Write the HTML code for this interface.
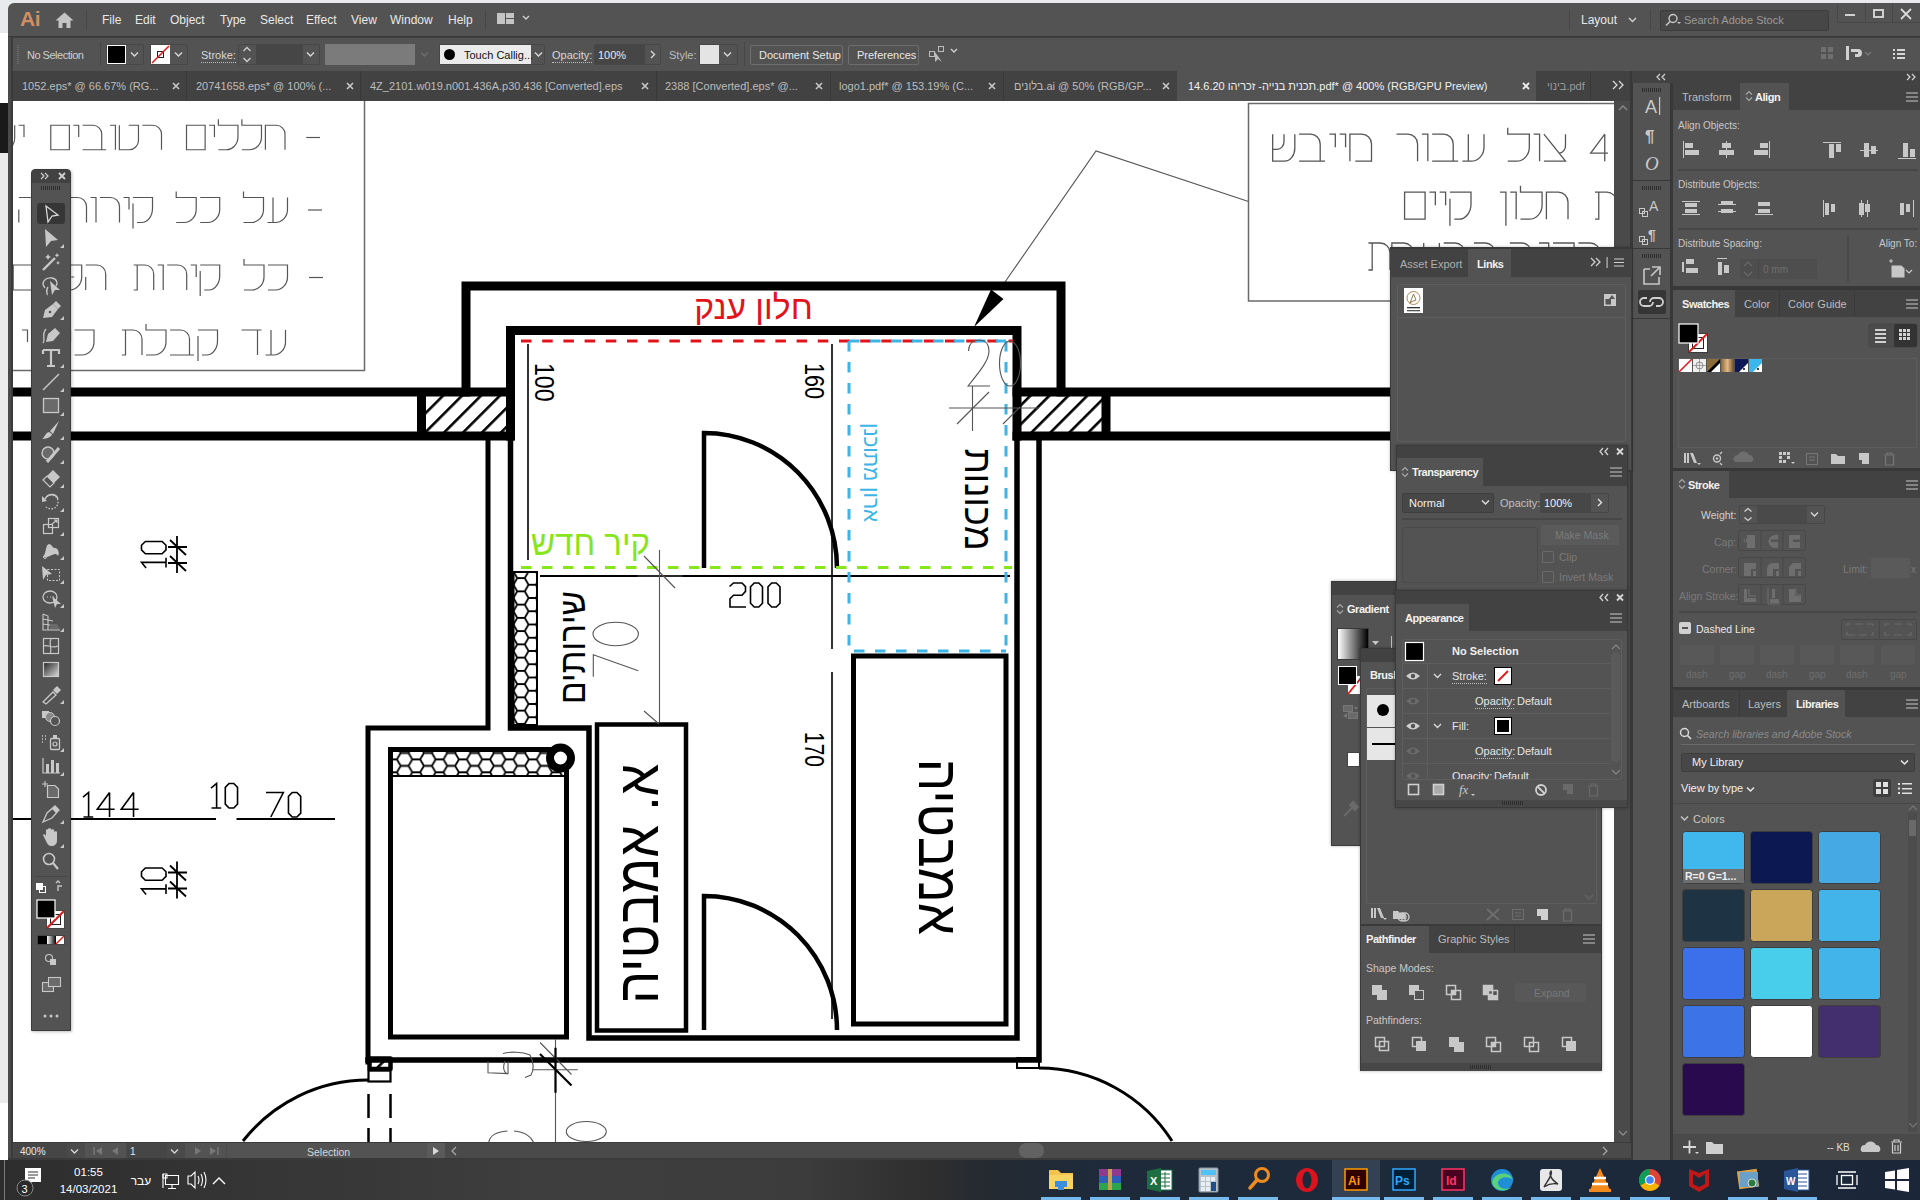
<!DOCTYPE html>
<html><head><meta charset="utf-8">
<style>
*{box-sizing:border-box}
html,body{margin:0;padding:0}
body{width:1920px;height:1200px;overflow:hidden;position:relative;background:#ececec;font-family:"Liberation Sans",sans-serif;color:#d6d6d6;font-size:11px}
.a{position:absolute}
.t{position:absolute;white-space:nowrap;line-height:1}
.pn{position:absolute;background:#535353}
svg{position:absolute;overflow:visible}
</style></head><body>
<!-- base.html -->
<div class="a" style="left:0;top:0;width:1920px;height:3px;background:#e8eaed"></div>
<div class="a" style="left:0;top:0;width:8px;height:33px;background:#e8eaed"></div>
<div class="a" style="left:0;top:33px;width:8px;height:70px;background:#fff"></div>
<div class="a" style="left:0;top:103px;width:8px;height:50px;background:#1a1a1a"></div>
<div class="a" style="left:0;top:1103px;width:8px;height:57px;background:#fff"></div>
<div class="a" style="left:8px;top:3px;width:1912px;height:1157px;background:#535353;border-radius:6px 0 0 0"></div>
<div class="a" style="left:8px;top:37px;width:5px;height:1123px;background:#4a4a4a"></div>
<div class="a" style="left:11px;top:37px;width:2px;height:1123px;background:#3a3a3a"></div>

<!-- canvas.html -->
<div class="a" style="left:13px;top:101px;width:1601px;height:1042px;background:#fff"></div>
<svg style="left:0;top:0" width="1920" height="1200" viewBox="0 0 1920 1200"><defs><clipPath id="cv"><rect x="13" y="101" width="1601" height="1042"/></clipPath>
<pattern id="hexv" patternUnits="userSpaceOnUse" x="521" y="584.75" width="22.5" height="13.25"><path d="M0 6.625 H3.75 L7.5 0 H15 L18.75 6.625 H22.5 M3.75 6.625 L7.5 13.25 H15 L18.75 6.625" fill="none" stroke="#000" stroke-width="1.8"/></pattern>
<pattern id="hexh" patternUnits="userSpaceOnUse" x="404.6" y="759.4" width="23.3" height="12.9"><path d="M0 6.45 H3.9 L7.75 0 H15.55 L19.4 6.45 H23.3 M3.9 6.45 L7.75 12.9 H15.55 L19.4 6.45" fill="none" stroke="#000" stroke-width="1.8"/></pattern>
<pattern id="hatch" patternUnits="userSpaceOnUse" width="13.4" height="13.4" patternTransform="translate(3,0) rotate(45)"><rect x="0" y="0" width="2.6" height="13.4" fill="#000"/></pattern>
</defs><g clip-path="url(#cv)">
<rect x="-10" y="95" width="374.5" height="275.5" fill="none" stroke="#6a6a6a" stroke-width="1.5"/>
<rect x="1248.5" y="103.5" width="420" height="197.5" fill="none" stroke="#6a6a6a" stroke-width="1.5"/>
<polyline points="1005,282 1096,151 1248.5,201.5" fill="none" stroke="#555" stroke-width="1.1"/>
<rect x="425" y="396" width="82" height="36" fill="url(#hatch)"/>
<rect x="1021" y="396" width="82" height="36" fill="url(#hatch)"/>
<rect x="513.5" y="572" width="23.5" height="153" fill="url(#hexv)" stroke="#000" stroke-width="2"/>
<rect x="392" y="752" width="172" height="24" fill="url(#hexh)"/>
<line x1="390" y1="776" x2="566" y2="776" stroke="#000" stroke-width="2"/>
<path d="M466 392 V286 H1061 V392" stroke="#000" fill="none" stroke-linejoin="miter" stroke-linecap="square" stroke-width="9"/>
<path d="M510.5 436 V330.5 H1017 V436" stroke="#000" fill="none" stroke-linejoin="miter" stroke-linecap="square" stroke-width="9"/>
<path d="M0 392 H510 M0 436 H510 M421.5 392 V436" stroke="#000" fill="none" stroke-linejoin="miter" stroke-linecap="square" stroke-width="9"/>
<path d="M1017 392 H1700 M1017 436 H1700 M1106 392 V436" stroke="#000" fill="none" stroke-linejoin="miter" stroke-linecap="square" stroke-width="9"/>
<path d="M488 436 V728 H368 V1062" stroke="#000" fill="none" stroke-linejoin="miter" stroke-linecap="square" stroke-width="5"/>
<path d="M510.5 436 V728 H589 V1038 H1017 V436" stroke="#000" fill="none" stroke-linejoin="miter" stroke-linecap="square" stroke-width="5.5"/>
<path d="M1039 436 V1060 H368" stroke="#000" fill="none" stroke-linejoin="miter" stroke-linecap="square" stroke-width="5.5"/>
<rect x="853.5" y="656" width="152.5" height="368" stroke="#000" fill="none" stroke-linejoin="miter" stroke-linecap="square" stroke-width="5"/>
<rect x="597" y="724.5" width="89" height="306" stroke="#000" fill="none" stroke-linejoin="miter" stroke-linecap="square" stroke-width="4.5"/>
<rect x="390.5" y="749.5" width="176" height="287.5" stroke="#000" fill="none" stroke-linejoin="miter" stroke-linecap="square" stroke-width="5"/>
<circle cx="560.5" cy="758" r="10.5" fill="#fff" stroke="#000" stroke-width="8"/>
<path d="M704 568 V433 A133 135 0 0 1 837 568" fill="none" stroke="#000" stroke-width="4.5"/>
<path d="M704 1030 V896 A133 134 0 0 1 837 1030" fill="none" stroke="#000" stroke-width="4.5"/>
<path d="M528 344 V560 M832 344 V649 M832 672 V1019" stroke="#000" stroke-width="1.6" fill="none"/>
<path d="M540 576 H1010" stroke="#000" stroke-width="2" fill="none"/>
<path d="M521 341 H1013" stroke="#e3131b" stroke-width="3" stroke-dasharray="10.5 10.7" fill="none"/>
<path d="M849 341 H1006 M849 341 V651 H1006 M1006 341 V651" stroke="#3db4e8" stroke-width="3" stroke-dasharray="10.5 10.5" fill="none"/>
<path d="M521 567.5 H1012" stroke="#87e51c" stroke-width="3" stroke-dasharray="10.5 10.5" fill="none"/>
<path d="M974 327 L991 289.5 L1003.5 299 Z" fill="#000"/>
<path d="M13 819 H216 M236.5 819 H335" stroke="#000" stroke-width="2" fill="none"/>
<path d="M243 1141 A158.6 158.6 0 0 1 368 1080" fill="none" stroke="#000" stroke-width="3"/>
<path d="M1039 1068 A157.7 157.7 0 0 1 1172 1141" fill="none" stroke="#000" stroke-width="3"/>
<path d="M368.5 1094 V1145 M390.5 1094 V1145" stroke="#000" stroke-width="2.5" stroke-dasharray="24 10" fill="none"/>
<rect x="369.5" y="1058.5" width="21" height="10.5" fill="url(#hatch)" stroke="#000" stroke-width="4.5" stroke-linejoin="round"/>
<rect x="368.5" y="1070.5" width="22" height="11" fill="none" stroke="#000" stroke-width="2.2"/>
<rect x="1017" y="1058" width="22" height="10" fill="none" stroke="#000" stroke-width="2"/>
<path d="M659.5 550 V722 M637.5 576 H682.5 M644 556 L675 588 M644 711 L659 724" stroke="#555" stroke-width="1.1" fill="none"/>
<path d="M949 408 H1039 M972.5 386 V431 M957 424 L989 392 M1003 424 L1020 407" stroke="#555" stroke-width="1.1" fill="none"/>
<path d="M555.5 1039 V1143 M532.7 1069.75 H577.8 M540 1042.5 L571.5 1074.5" stroke="#555" stroke-width="1.1" fill="none"/>
</g>
<g clip-path="url(#cv)">
<text x="753.5" y="319" font-size="33" fill="#e3131b" font-family="Liberation Sans" font-weight="normal" text-anchor="middle" style="unicode-bidi:bidi-override;direction:ltr" textLength="118.5" lengthAdjust="spacingAndGlyphs">קנע ןולח</text>
<text x="590.5" y="555" font-size="34.5" fill="#87e51c" font-family="Liberation Sans" font-weight="normal" text-anchor="middle" style="unicode-bidi:bidi-override;direction:ltr" textLength="119" lengthAdjust="spacingAndGlyphs">שדח ריק</text>
<text x="0" y="0" font-size="21.5" fill="#3db4e8" font-family="Liberation Sans" font-weight="normal" text-anchor="middle" style="unicode-bidi:bidi-override;direction:ltr" textLength="99" lengthAdjust="spacingAndGlyphs" transform="translate(864,472.5) rotate(90)">ןנכותמ ןורא</text>
<text x="0" y="0" font-size="39" fill="#000" font-family="Liberation Sans" font-weight="normal" text-anchor="middle" style="unicode-bidi:bidi-override;direction:ltr" textLength="102" lengthAdjust="spacingAndGlyphs" transform="translate(964.6,499.8) rotate(90)">תונוכמ</text>
<text x="0" y="0" font-size="36" fill="#000" font-family="Liberation Sans" font-weight="normal" text-anchor="middle" style="unicode-bidi:bidi-override;direction:ltr" textLength="113" lengthAdjust="spacingAndGlyphs" transform="translate(585,647.5) rotate(-90)">םיתוריש</text>
<text x="0" y="0" font-size="58" fill="#000" font-family="Liberation Sans" font-weight="normal" text-anchor="middle" style="unicode-bidi:bidi-override;direction:ltr" textLength="240" lengthAdjust="spacingAndGlyphs" transform="translate(657.6,883.8) rotate(-90)">היטבמא .א</text>
<text x="0" y="0" font-size="56" fill="#000" font-family="Liberation Sans" font-weight="normal" text-anchor="middle" style="unicode-bidi:bidi-override;direction:ltr" textLength="176" lengthAdjust="spacingAndGlyphs" transform="translate(919,846.8) rotate(90)">היטבמא</text>
<text x="0" y="0" font-size="28" fill="#000" font-family="Liberation Sans" font-weight="normal" text-anchor="middle" style="unicode-bidi:bidi-override;direction:ltr" textLength="38.7" lengthAdjust="spacingAndGlyphs" transform="translate(535,382.3) rotate(90)">100</text>
<text x="0" y="0" font-size="28" fill="#000" font-family="Liberation Sans" font-weight="normal" text-anchor="middle" style="unicode-bidi:bidi-override;direction:ltr" textLength="36" lengthAdjust="spacingAndGlyphs" transform="translate(805,381) rotate(90)">160</text>
<text x="0" y="0" font-size="28" fill="#000" font-family="Liberation Sans" font-weight="normal" text-anchor="middle" style="unicode-bidi:bidi-override;direction:ltr" textLength="35" lengthAdjust="spacingAndGlyphs" transform="translate(805,749.5) rotate(90)">170</text>
</g>
<g clip-path="url(#cv)">
<g transform="translate(729.5,583) scale(1.0)" fill="none" stroke="#000" stroke-width="1.6" stroke-linejoin="miter"><path d="M0 3.5 L4 0 H12.5 L16 3.6 V8.4 L12.5 12.2 H4 L0.5 15.8 V24 H16.5" transform="translate(0,0)"/><path d="M3.7 0 H8.3 L12 3.8 V20.2 L8.3 24 H3.7 L0 20.2 V3.8 Z" transform="translate(21,0)"/><path d="M3.7 0 H8.3 L12 3.8 V20.2 L8.3 24 H3.7 L0 20.2 V3.8 Z" transform="translate(38.5,0)"/></g>
<g transform="translate(83,792.5) scale(1.0208333333333333)" fill="none" stroke="#000" stroke-width="1.5673469387755103" stroke-linejoin="miter"><path d="M0 4.5 L5.5 0 V24 M0.5 24 H10" transform="translate(0,0)"/><path d="M12 0 L0 16.4 H17 M12 0 V24" transform="translate(14,0)"/><path d="M12 0 L0 16.4 H17 M12 0 V24" transform="translate(37.5,0)"/></g>
<g transform="translate(211,783.5) scale(1.0208333333333333)" fill="none" stroke="#000" stroke-width="1.5673469387755103" stroke-linejoin="miter"><path d="M0 4.5 L5.5 0 V24 M0.5 24 H10" transform="translate(0,0)"/><path d="M3.7 0 H8.3 L12 3.8 V20.2 L8.3 24 H3.7 L0 20.2 V3.8 Z" transform="translate(14,0)"/></g>
<g transform="translate(266,792.5) scale(1.0208333333333333)" fill="none" stroke="#000" stroke-width="1.5673469387755103" stroke-linejoin="miter"><path d="M0 0 H17 L4.7 24" transform="translate(0,0)"/><path d="M3.7 0 H8.3 L12 3.8 V20.2 L8.3 24 H3.7 L0 20.2 V3.8 Z" transform="translate(22,0)"/></g>
<g transform="translate(141.5,568) rotate(-90) scale(1.0208333333333333)" fill="none" stroke="#000" stroke-width="1.5673469387755103" stroke-linejoin="miter"><path d="M0 4.5 L5.5 0 V24 M0.5 24 H10" transform="translate(0,0)"/><path d="M3.7 0 H8.3 L12 3.8 V20.2 L8.3 24 H3.7 L0 20.2 V3.8 Z" transform="translate(14,0)"/></g>
<g transform="translate(141.5,894.5) rotate(-90) scale(1.0208333333333333)" fill="none" stroke="#000" stroke-width="1.5673469387755103" stroke-linejoin="miter"><path d="M0 4.5 L5.5 0 V24 M0.5 24 H10" transform="translate(0,0)"/><path d="M3.7 0 H8.3 L12 3.8 V20.2 L8.3 24 H3.7 L0 20.2 V3.8 Z" transform="translate(14,0)"/></g>
<path d="M177 536 V573 M168 547 H187 M168 563 H187 M170 540 L186 555 M170 556 L186 571" stroke="#000" stroke-width="1.8" fill="none"/>
<path d="M177 861.5 V898.5 M168 872.5 H187 M168 888.5 H187 M170 865.5 L186 880.5 M170 881.5 L186 896.5" stroke="#000" stroke-width="1.8" fill="none"/>
<g fill="none" stroke="#555" stroke-width="1.1" clip-path="url(#cv)">
<path d="M968.5 351 C969 343 974 340 979 340 C985 340 989 344 989 351 C989 360 981 370 968 386 H990"/>
<ellipse cx="1010" cy="363.5" rx="10.5" ry="22.5"/>
<path d="M593.3 676.7 V654.7 L638.3 670.7"/><ellipse cx="615.7" cy="634" rx="22.7" ry="11.7"/>
</g>
<g clip-path="url(#cv)" stroke-linejoin="miter">
<g fill="none" stroke="#555" stroke-width="1.2" vector-effect="non-scaling-stroke"><path transform="translate(306.28,125.25) scale(0.9800)" d="M0 12.5 H14"/></g>
<g fill="none" stroke="#555" stroke-width="1.2" vector-effect="non-scaling-stroke"><path transform="translate(265.40,125.25) scale(0.9800)" d="M0 25 V0 H11 A9 9 0 0 1 20 9 V25"/><path transform="translate(241.88,125.25) scale(0.9800)" d="M0 -6 V0 H20 V12 A12 13 0 0 1 8 25 H0"/><path transform="translate(218.36,125.25) scale(0.9800)" d="M0 -6 V0 H20 V12 A12 13 0 0 1 8 25 H0"/><path transform="translate(209.05,125.25) scale(0.9800)" d="M0 0 H5.5 V12"/><path transform="translate(186.51,125.25) scale(0.9800)" d="M0 0 H19 V25 H0 Z"/></g>
<g fill="none" stroke="#555" stroke-width="1.2" vector-effect="non-scaling-stroke"><path transform="translate(142.39,125.25) scale(0.9800)" d="M0 0 H10.5 A9 9 0 0 1 19.5 9 V25"/><path transform="translate(119.36,125.25) scale(0.9800)" d="M0 0 V25 H10 A9.5 9.5 0 0 0 19.5 15.5 V0 H9.5"/><path transform="translate(110.05,125.25) scale(0.9800)" d="M0 0 H5.5 V25"/><path transform="translate(82.61,125.25) scale(0.9800)" d="M0 0 H10.5 A9 9 0 0 1 19.5 9 V25 M0 25 H24"/><path transform="translate(73.30,125.25) scale(0.9800)" d="M0 0 H5.5 V12"/><path transform="translate(50.76,125.25) scale(0.9800)" d="M0 0 H19 V25 H0 Z"/></g>
<g fill="none" stroke="#555" stroke-width="1.2" vector-effect="non-scaling-stroke"><path transform="translate(18.61,125.25) scale(0.9800)" d="M0 0 H5.5 V12"/><path transform="translate(-5.40,125.25) scale(0.9800)" d="M0 0 V25 H11 A9.5 12 0 0 0 20.5 13 V0 M10.5 0 V7 A6.5 7 0 0 1 4 14 H0"/></g>
<g fill="none" stroke="#555" stroke-width="1.2" vector-effect="non-scaling-stroke"><path transform="translate(308.00,197.50) scale(1.0000)" d="M0 12.5 H14"/></g>
<g fill="none" stroke="#555" stroke-width="1.2" vector-effect="non-scaling-stroke"><path transform="translate(267.50,197.50) scale(1.0000)" d="M5.5 0 V25 M20 0 V12 A12 13 0 0 1 8 25 H0"/><path transform="translate(243.50,197.50) scale(1.0000)" d="M0 -6 V0 H20 V12 A12 13 0 0 1 8 25 H0"/></g>
<g fill="none" stroke="#555" stroke-width="1.2" vector-effect="non-scaling-stroke"><path transform="translate(200.20,197.50) scale(1.0000)" d="M0 0 H19.5 V12 A12 13 0 0 1 7.5 25 H0"/><path transform="translate(176.20,197.50) scale(1.0000)" d="M0 -6 V0 H20 V12 A12 13 0 0 1 8 25 H0"/></g>
<g fill="none" stroke="#555" stroke-width="1.2" vector-effect="non-scaling-stroke"><path transform="translate(133.00,197.50) scale(1.0000)" d="M0 0 H19.5 V11 A11 14 0 0 1 8.5 25 H4 M0 6 V31"/><path transform="translate(123.50,197.50) scale(1.0000)" d="M0 0 H5.5 V12"/><path transform="translate(100.00,197.50) scale(1.0000)" d="M0 0 H10.5 A9 9 0 0 1 19.5 9 V25"/><path transform="translate(90.50,197.50) scale(1.0000)" d="M0 0 H5.5 V25"/><path transform="translate(66.50,197.50) scale(1.0000)" d="M3.5 0 V25 H0 M0 0 H11 A9 9 0 0 1 20 9 V25"/></g>
<g fill="none" stroke="#555" stroke-width="1.2" vector-effect="non-scaling-stroke"><path transform="translate(18.80,197.50) scale(1.0000)" d="M0 0 H11 A9 9 0 0 1 20 9 V25 M0 12 V25"/></g>
<g fill="none" stroke="#555" stroke-width="1.2" vector-effect="non-scaling-stroke"><path transform="translate(309.00,265.00) scale(1.0000)" d="M0 12.5 H14"/></g>
<g fill="none" stroke="#555" stroke-width="1.2" vector-effect="non-scaling-stroke"><path transform="translate(268.00,265.00) scale(1.0000)" d="M0 0 H19.5 V12 A12 13 0 0 1 7.5 25 H0"/><path transform="translate(244.00,265.00) scale(1.0000)" d="M0 -6 V0 H20 V12 A12 13 0 0 1 8 25 H0"/></g>
<g fill="none" stroke="#555" stroke-width="1.2" vector-effect="non-scaling-stroke"><path transform="translate(200.20,265.00) scale(1.0000)" d="M0 0 H19.5 V11 A11 14 0 0 1 8.5 25 H4 M0 6 V31"/><path transform="translate(190.70,265.00) scale(1.0000)" d="M0 0 H5.5 V12"/><path transform="translate(167.20,265.00) scale(1.0000)" d="M0 0 H10.5 A9 9 0 0 1 19.5 9 V25"/><path transform="translate(157.70,265.00) scale(1.0000)" d="M0 0 H5.5 V25"/><path transform="translate(133.70,265.00) scale(1.0000)" d="M3.5 0 V25 H0 M0 0 H11 A9 9 0 0 1 20 9 V25"/></g>
<g fill="none" stroke="#555" stroke-width="1.2" vector-effect="non-scaling-stroke"><path transform="translate(85.70,265.00) scale(1.0000)" d="M0 0 H11 A9 9 0 0 1 20 9 V25 M0 12 V25"/><path transform="translate(61.70,265.00) scale(1.0000)" d="M0 0 H20 V12 A12 13 0 0 1 8 25 H0 M9.5 12 H12.5"/><path transform="translate(45.70,265.00) scale(1.0000)" d="M3 0 H12 V25 H0"/><path transform="translate(36.20,265.00) scale(1.0000)" d="M0 0 H5.5 V12"/><path transform="translate(13.20,265.00) scale(1.0000)" d="M0 0 H19 V25 H0 Z"/></g>
<g fill="none" stroke="#555" stroke-width="1.2" vector-effect="non-scaling-stroke"><path transform="translate(265.50,330.00) scale(1.0000)" d="M5.5 0 V25 M20 0 V12 A12 13 0 0 1 8 25 H0"/><path transform="translate(241.50,330.00) scale(1.0000)" d="M0 0 H20 M16 0 V25"/></g>
<g fill="none" stroke="#555" stroke-width="1.2" vector-effect="non-scaling-stroke"><path transform="translate(198.00,330.00) scale(1.0000)" d="M0 0 H19.5 V11 A11 14 0 0 1 8.5 25 H4 M0 6 V31"/><path transform="translate(170.00,330.00) scale(1.0000)" d="M0 0 H10.5 A9 9 0 0 1 19.5 9 V25 M0 25 H24"/><path transform="translate(146.00,330.00) scale(1.0000)" d="M0 -6 V0 H20 V12 A12 13 0 0 1 8 25 H0"/><path transform="translate(122.00,330.00) scale(1.0000)" d="M3.5 0 V25 H0 M0 0 H11 A9 9 0 0 1 20 9 V25"/></g>
<g fill="none" stroke="#555" stroke-width="1.2" vector-effect="non-scaling-stroke"><path transform="translate(74.50,330.00) scale(1.0000)" d="M0 0 H19.5 V12 A12 13 0 0 1 7.5 25 H0"/><path transform="translate(65.00,330.00) scale(1.0000)" d="M0 0 H5.5 V12"/><path transform="translate(41.00,330.00) scale(1.0000)" d="M0 0 H11 A9 9 0 0 1 20 9 V16 A9 9 0 0 1 11 25 H0 Z"/><path transform="translate(31.50,330.00) scale(1.0000)" d="M0 0 H5.5 V25"/><path transform="translate(22.00,330.00) scale(1.0000)" d="M0 0 H5.5 V12"/></g>
<g fill="none" stroke="#555" stroke-width="1.2" vector-effect="non-scaling-stroke"><path transform="translate(1590.72,134.20) scale(1.0800)" d="M13 0 L0 17.5 H16 M13 0 V25"/></g>
<g fill="none" stroke="#555" stroke-width="1.2" vector-effect="non-scaling-stroke"><path transform="translate(1543.90,134.20) scale(1.0800)" d="M0 0 L20 25 H0 M20 0 V10 A6.5 7 0 0 1 14.5 17.5"/><path transform="translate(1533.64,134.20) scale(1.0800)" d="M0 0 H5.5 V25"/><path transform="translate(1507.72,134.20) scale(1.0800)" d="M0 -6 V0 H20 V12 A12 13 0 0 1 8 25 H0"/></g>
<g fill="none" stroke="#555" stroke-width="1.2" vector-effect="non-scaling-stroke"><path transform="translate(1462.40,134.20) scale(1.0800)" d="M5.5 0 V25 M20 0 V12 A12 13 0 0 1 8 25 H0"/><path transform="translate(1432.16,134.20) scale(1.0800)" d="M0 0 H10.5 A9 9 0 0 1 19.5 9 V25 M0 25 H24"/><path transform="translate(1421.90,134.20) scale(1.0800)" d="M0 0 H5.5 V25"/><path transform="translate(1396.52,134.20) scale(1.0800)" d="M0 0 H10.5 A9 9 0 0 1 19.5 9 V25"/></g>
<g fill="none" stroke="#555" stroke-width="1.2" vector-effect="non-scaling-stroke"><path transform="translate(1349.90,134.20) scale(1.0800)" d="M0 25 V0 H11 A9 9 0 0 1 20 9 V25 H5"/><path transform="translate(1339.64,134.20) scale(1.0800)" d="M0 0 H5.5 V12"/><path transform="translate(1329.38,134.20) scale(1.0800)" d="M0 0 H5.5 V12"/><path transform="translate(1299.14,134.20) scale(1.0800)" d="M0 0 H10.5 A9 9 0 0 1 19.5 9 V25 M0 25 H24"/><path transform="translate(1272.68,134.20) scale(1.0800)" d="M0 0 V25 H11 A9.5 12 0 0 0 20.5 13 V0 M10.5 0 V7 A6.5 7 0 0 1 4 14 H0"/></g>
<g fill="none" stroke="#555" stroke-width="1.2" vector-effect="non-scaling-stroke"><path transform="translate(1620.90,192.20) scale(1.0800)" d="M0 0 L20 25 M20 0 V8 L14 11 M0 25 V15 L6 12"/><path transform="translate(1594.98,192.20) scale(1.0800)" d="M3.5 0 V25 H0 M0 0 H11 A9 9 0 0 1 20 9 V25"/></g>
<g fill="none" stroke="#555" stroke-width="1.2" vector-effect="non-scaling-stroke"><path transform="translate(1546.40,192.20) scale(1.0800)" d="M0 25 V0 H11 A9 9 0 0 1 20 9 V25"/><path transform="translate(1520.48,192.20) scale(1.0800)" d="M0 -6 V0 H20 V12 A12 13 0 0 1 8 25 H0"/><path transform="translate(1510.22,192.20) scale(1.0800)" d="M0 0 H5.5 V25"/><path transform="translate(1499.96,192.20) scale(1.0800)" d="M0 0 H5.5 V31"/></g>
<g fill="none" stroke="#555" stroke-width="1.2" vector-effect="non-scaling-stroke"><path transform="translate(1449.94,192.20) scale(1.0800)" d="M0 0 H19.5 V11 A11 14 0 0 1 8.5 25 H4 M0 6 V31"/><path transform="translate(1439.68,192.20) scale(1.0800)" d="M0 0 H5.5 V12"/><path transform="translate(1429.42,192.20) scale(1.0800)" d="M0 0 H5.5 V12"/><path transform="translate(1404.58,192.20) scale(1.0800)" d="M0 0 H19 V25 H0 Z"/></g>
<g fill="none" stroke="#555" stroke-width="1.2" vector-effect="non-scaling-stroke"><path transform="translate(1578.40,243.00) scale(1.0800)" d="M0 0 H11 A9 9 0 0 1 20 9 V25 M0 12 V25"/><path transform="translate(1553.02,243.00) scale(1.0800)" d="M0 0 H19.5 V12 A12 13 0 0 1 7.5 25 H0"/><path transform="translate(1535.74,243.00) scale(1.0800)" d="M3 0 H12 V25 H0"/><path transform="translate(1509.82,243.00) scale(1.0800)" d="M0 0 H11 A9 9 0 0 1 20 9 V25 M0 12 V25"/></g>
<g fill="none" stroke="#555" stroke-width="1.2" vector-effect="non-scaling-stroke"><path transform="translate(1473.94,243.00) scale(1.0800)" d="M0 0 H10.5 A9 9 0 0 1 19.5 9 V25"/><path transform="translate(1443.70,243.00) scale(1.0800)" d="M0 0 H10.5 A9 9 0 0 1 19.5 9 V25 M0 25 H24"/><path transform="translate(1417.78,243.00) scale(1.0800)" d="M5.5 0 V25 M20 0 V12 A12 13 0 0 1 8 25 H0"/><path transform="translate(1391.86,243.00) scale(1.0800)" d="M0 25 V0 H11 A9 9 0 0 1 20 9 V25 H5"/></g>
<g fill="none" stroke="#555" stroke-width="1.2" vector-effect="non-scaling-stroke"><path transform="translate(1368.40,243.00) scale(1.0800)" d="M3.5 0 V25 H0 M0 0 H11 A9 9 0 0 1 20 9 V25"/></g>
</g>
<g clip-path="url(#cv)"><path d="M555.5 1047.7 V1092.7 M540 1054 L571.5 1085.5" stroke="#000" stroke-width="2.2" fill="none"/>
<g fill="none" stroke="#555" stroke-width="1.1"><path d="M508 1061.6 V1073.6 L488 1072.8 V1061.6 M503 1053.5 C510 1051.5 522 1051.5 530 1055 C534 1062 534 1070 531 1075 L525 1077.5 M505 1061 C503 1066 503 1071 507 1074"/><ellipse cx="586.3" cy="1131.5" rx="20" ry="10"/><path d="M488.5 1143 C490 1135 496 1132 507.5 1131 M514 1131 C524 1132 530 1135 534 1143"/></g></g>
</svg>
<!-- tool.html -->
<div class="a" style="left:31px;top:169px;width:40px;height:862px;background:#535353;border:1px solid #3c3c3c;border-radius:4px 4px 0 0;box-shadow:1px 1px 3px rgba(0,0,0,0.25)"></div>
<div class="a" style="left:32px;top:170px;width:38px;height:13px;background:#424242;border-radius:3px 3px 0 0"></div>
<svg style="left:0;top:0" width="100" height="1100" viewBox="0 0 100 1100">
<path d="M41 173 L44 176 L41 179 M45 173 L48 176 L45 179" stroke="#cfcfcf" stroke-width="1.2" fill="none"/>
<path d="M59 173 L65 179 M65 173 L59 179" stroke="#d0d0d0" stroke-width="1.8"/>
<g fill="#2e2e2e"><rect x="41" y="186" width="1" height="4"/><rect x="43" y="186" width="1" height="4"/><rect x="45" y="186" width="1" height="4"/><rect x="47" y="186" width="1" height="4"/><rect x="49" y="186" width="1" height="4"/><rect x="51" y="186" width="1" height="4"/><rect x="53" y="186" width="1" height="4"/><rect x="55" y="186" width="1" height="4"/><rect x="57" y="186" width="1" height="4"/><rect x="59" y="186" width="1" height="4"/></g>
<rect x="37" y="203" width="28" height="21" rx="3" fill="#363636"/>
<path d="M46 206 L58 215 L52 216 L48 222 Z" fill="none" stroke="#d8d8d8" stroke-width="1.3"/><path d="M45 229 L58 240 L51 241 L46 247 Z" fill="#c8c8c8"/><path d="M60 248 L64 244 L64 248 Z" fill="#c8c8c8"/><path d="M43 270 L55 258" stroke="#c8c8c8" stroke-width="2.4"/><path d="M48 254 l1 2 l2 1 l-2 1 l-1 2 l-1 -2 l-2 -1 l2 -1 z M57 253 l0.8 1.5 l1.5 .8 l-1.5 .8 l-.8 1.5 l-.8 -1.5 l-1.5 -.8 l1.5 -.8z M58 261 l.7 1.2 l1.2 .7 l-1.2 .7 l-.7 1.2 l-.7 -1.2 l-1.2 -.7 l1.2 -.7z" fill="#c8c8c8"/><path d="M45 288 C40 282 46 277 52 278 C57 279 58 283 56 286 M48 287 C45 291 48 294 47 295" stroke="#c8c8c8" stroke-width="1.4" fill="none"/><path d="M50 281 L60 290 L55 290 L52 295 Z" fill="#c8c8c8"/><path d="M43 318 L45 310 L53 304 L58 309 L52 317 Z" fill="#c8c8c8"/><path d="M53 304 L56 301 L61 306 L58 309" fill="#c8c8c8"/><circle cx="50" cy="312" r="1.3" fill="#535353"/><path d="M60 320 L64 316 L64 320 Z" fill="#c8c8c8"/><path d="M46 342 L48 334 L55 328 L60 333 L53 341 Z" fill="#c8c8c8"/><path d="M46 329 C41 335 46 339 43 343" stroke="#c8c8c8" stroke-width="1.3" fill="none"/><path d="M43 350 H59 V354 M43 350 V354 M51 350 V366 M47 366 H55" stroke="#c8c8c8" stroke-width="2.2" fill="none"/><path d="M60 368 L64 364 L64 368 Z" fill="#c8c8c8"/><path d="M43 390 L59 374" stroke="#c8c8c8" stroke-width="1.5"/><path d="M60 392 L64 388 L64 392 Z" fill="#c8c8c8"/><rect x="43.5" y="398.5" width="15" height="14" fill="#6a6a6a" stroke="#c8c8c8" stroke-width="1.3"/><path d="M60 416 L64 412 L64 416 Z" fill="#c8c8c8"/><path d="M59 421 L50 431 L53 434 Z" fill="#c8c8c8"/><path d="M49 432 C45 433 45 437 42 439 C48 439 52 436 52 434 Z" fill="#c8c8c8"/><path d="M60 440 L64 436 L64 440 Z" fill="#c8c8c8"/><circle cx="48" cy="453" r="6" fill="#6a6a6a" stroke="#c8c8c8" stroke-width="1.4"/><path d="M47 462 L59 448" stroke="#c8c8c8" stroke-width="3"/><path d="M60 464 L64 460 L64 464 Z" fill="#c8c8c8"/><path d="M43 480 L53 470 L60 477 L50 487 Z" fill="#c8c8c8"/><path d="M43 480 L47 476 L54 483 L50 487 Z" fill="#535353" stroke="#c8c8c8" stroke-width="1.2"/><path d="M60 488 L64 484 L64 488 Z" fill="#c8c8c8"/><path d="M45 499 C48 493 58 494 58 502 C58 509 49 511 45 506" stroke="#c8c8c8" stroke-width="1.3" stroke-dasharray="1.5 1.5" fill="none"/><path d="M45 499 C48 493 56 493 58 499" stroke="#c8c8c8" stroke-width="1.4" fill="none"/><path d="M42 496 L47 501 L42 502 Z" fill="#c8c8c8"/><path d="M60 512 L64 508 L64 512 Z" fill="#c8c8c8"/><rect x="43.5" y="524.5" width="9" height="9" fill="none" stroke="#c8c8c8" stroke-width="1.2"/><rect x="48.5" y="518.5" width="10" height="9" fill="none" stroke="#c8c8c8" stroke-width="1.2"/><path d="M52 524 L57 520 M54 520 H57 V523" stroke="#c8c8c8" stroke-width="1.1" fill="none"/><path d="M60 536 L64 532 L64 536 Z" fill="#c8c8c8"/><path d="M43 557 C47 552 45 545 49 544 C52 544 52 548 55 548 C58 548 60 553 58 556 C56 553 55 554 52 555 C49 556 47 558 43 557 Z" fill="#c8c8c8"/><circle cx="45" cy="557" r="1.5" fill="none" stroke="#c8c8c8"/><path d="M60 560 L64 556 L64 560 Z" fill="#c8c8c8"/><path d="M42 566 L52 574 L46 575 L43 580 Z" fill="#c8c8c8"/><rect x="47.5" y="569.5" width="12" height="11" fill="none" stroke="#c8c8c8" stroke-width="1" stroke-dasharray="2 1.5"/><path d="M60 584 L64 580 L64 584 Z" fill="#c8c8c8"/><ellipse cx="50" cy="597" rx="7" ry="6" fill="none" stroke="#c8c8c8" stroke-width="1.3"/><path d="M47 597 h1 M50 597 h1 M53 597 h1" stroke="#c8c8c8"/><path d="M52 596 L61 604 L57 604 L55 608 Z" fill="#c8c8c8"/><path d="M60 608 L64 604 L64 608 Z" fill="#c8c8c8"/><path d="M43 614 V630 H60 M43 614 L48 616 V630 M43 619 L53 621 M43 624 L57 626" stroke="#c8c8c8" stroke-width="1.1" fill="none"/><path d="M50 624 L57 624 L60 629 L50 629 Z" fill="#6a6a6a"/><path d="M60 632 L64 628 L64 632 Z" fill="#c8c8c8"/><rect x="43.5" y="638.5" width="15" height="15" fill="none" stroke="#c8c8c8" stroke-width="1.2"/><path d="M43 646 C48 644 52 649 58 646 M51 639 C48 644 53 649 50 654" stroke="#c8c8c8" stroke-width="1.1" fill="none"/><defs><linearGradient id="tg" x1="0" x2="1" y1="0" y2="1"><stop offset="0" stop-color="#222"/><stop offset="1" stop-color="#ddd"/></linearGradient></defs><rect x="43.5" y="662.5" width="15" height="14" fill="url(#tg)" stroke="#c8c8c8" stroke-width="1.2"/><path d="M43 702 L53 692 L56 695 L46 704 Z" fill="none" stroke="#c8c8c8" stroke-width="1.3"/><path d="M53 690 L57 686 L61 690 L57 694 Z" fill="#c8c8c8"/><path d="M60 704 L64 700 L64 704 Z" fill="#c8c8c8"/><rect x="42" y="711" width="7" height="7" fill="#c8c8c8"/><circle cx="50" cy="717" r="4.5" fill="#888" stroke="#c8c8c8"/><circle cx="55" cy="721" r="4.5" fill="#535353" stroke="#c8c8c8" stroke-width="1.2"/><path d="M42 736 h1 M45 736 h1 M42 739 h1 M45 739 h1 M42 742 h1" stroke="#c8c8c8" stroke-width="1.5"/><rect x="50.5" y="738.5" width="9" height="11" rx="1" fill="none" stroke="#c8c8c8" stroke-width="1.3"/><rect x="53" y="735" width="4" height="3" fill="#c8c8c8"/><circle cx="55" cy="744" r="2" fill="none" stroke="#c8c8c8" stroke-width="1.2"/><path d="M60 752 L64 748 L64 752 Z" fill="#c8c8c8"/><path d="M43 758 V773 H60" stroke="#c8c8c8" stroke-width="1.2" fill="none"/><rect x="46" y="764" width="3" height="9" fill="#c8c8c8"/><rect x="51" y="760" width="3" height="13" fill="#c8c8c8"/><rect x="56" y="763" width="3" height="10" fill="#c8c8c8"/><path d="M60 776 L64 772 L64 776 Z" fill="#c8c8c8"/><path d="M42 784 H48 M45 781 V787" stroke="#c8c8c8" stroke-width="1.1"/><path d="M47.5 785.5 H55 L58.5 789 V797.5 H47.5 Z" fill="#6a6a6a" stroke="#c8c8c8" stroke-width="1.2"/><path d="M43 822 L47 813 L55 806 L59 810 L52 818 Z" fill="none" stroke="#c8c8c8" stroke-width="1.3"/><path d="M55 806 L59 810 L56 813 L52 809 Z" fill="#c8c8c8"/><path d="M60 824 L64 820 L64 824 Z" fill="#c8c8c8"/><path d="M45 839 L43 835 C43 834 45 834 46 836 V830 C46 829 48 829 48 830 V835 V829 C48 828 51 828 51 829 V835 V830 C51 829 54 829 54 830 V836 V832 C54 831 57 831 57 832 V840 C57 844 55 846 51 846 C48 846 47 843 45 839 Z" fill="#c8c8c8"/><path d="M60 848 L64 844 L64 848 Z" fill="#c8c8c8"/><circle cx="49" cy="859" r="5.5" fill="none" stroke="#c8c8c8" stroke-width="1.6"/><path d="M53 863 L58 869" stroke="#c8c8c8" stroke-width="2.2"/>
<rect x="35" y="876" width="32" height="1" fill="#474747"/>
<rect x="36.5" y="883.5" width="6" height="6" fill="#000" stroke="#fff"/><rect x="39.5" y="886.5" width="6" height="6" fill="none" stroke="#fff" stroke-width="1"/><rect x="37" y="884" width="5" height="5" fill="#fff"/>
<path d="M58 891 V886 H62 M56 883 L58 881 L60 883" stroke="#c8c8c8" stroke-width="1.4" fill="none"/>
<rect x="46.5" y="910.5" width="18" height="18" fill="#fff" stroke="#444"/><rect x="50.5" y="914.5" width="10" height="10" fill="none" stroke="#222"/><path d="M47 928 L64 911" stroke="#e01b1b" stroke-width="2.2"/>
<rect x="37" y="900" width="18" height="18" fill="#000" stroke="#fff" stroke-width="1.2"/>
<rect x="37.5" y="935.5" width="27" height="9" fill="none" stroke="#444"/><rect x="38" y="936" width="9" height="8" fill="#000"/><defs><linearGradient id="tg2"><stop offset="0" stop-color="#fff"/><stop offset="1" stop-color="#000"/></linearGradient></defs><rect x="47" y="936" width="9" height="8" fill="url(#tg2)"/><rect x="56" y="936" width="8" height="8" fill="#fff"/><path d="M56 944 L64 936" stroke="#e01b1b" stroke-width="1.5"/>
<circle cx="49" cy="958" r="3.5" fill="none" stroke="#c8c8c8" stroke-width="1.1"/><rect x="50" y="959" width="6" height="6" fill="#c8c8c8"/>
<rect x="42.5" y="982.5" width="11" height="9" fill="#6a6a6a" stroke="#c8c8c8" stroke-width="1.1"/><rect x="48.5" y="977.5" width="12" height="9" fill="#6a6a6a" stroke="#c8c8c8" stroke-width="1.1"/>
<circle cx="45" cy="1016" r="1.5" fill="#c8c8c8"/><circle cx="51" cy="1016" r="1.5" fill="#c8c8c8"/><circle cx="57" cy="1016" r="1.5" fill="#c8c8c8"/>
</svg>
<!-- menubar.html -->
<div class="a" style="left:8px;top:36px;width:1912px;height:1px;background:#3a3a3a"></div>
<div class="t" style="left:20px;top:8px;font-size:21px;font-weight:bold;color:#d08f62;letter-spacing:-0.5px">Ai</div>
<svg style="left:55px;top:12px" width="19" height="17" viewBox="0 0 19 17"><path d="M9.5 0.5 L18.5 8.5 L15.5 8.5 L15.5 16 L11.5 16 L11.5 11 L7.5 11 L7.5 16 L3.5 16 L3.5 8.5 L0.5 8.5 Z" fill="#c4c4c4"/></svg>
<div class="a" style="left:86px;top:10px;width:1px;height:20px;background:#474747"></div>
<div class="t" style="left:102px;top:14px;font-size:12px;color:#e8e8e8">File</div>
<div class="t" style="left:135px;top:14px;font-size:12px;color:#e8e8e8">Edit</div>
<div class="t" style="left:170px;top:14px;font-size:12px;color:#e8e8e8">Object</div>
<div class="t" style="left:220px;top:14px;font-size:12px;color:#e8e8e8">Type</div>
<div class="t" style="left:260px;top:14px;font-size:12px;color:#e8e8e8">Select</div>
<div class="t" style="left:306px;top:14px;font-size:12px;color:#e8e8e8">Effect</div>
<div class="t" style="left:351px;top:14px;font-size:12px;color:#e8e8e8">View</div>
<div class="t" style="left:390px;top:14px;font-size:12px;color:#e8e8e8">Window</div>
<div class="t" style="left:448px;top:14px;font-size:12px;color:#e8e8e8">Help</div>
<div class="a" style="left:485px;top:10px;width:1px;height:20px;background:#474747"></div>
<svg style="left:497px;top:13px" width="34" height="12" viewBox="0 0 34 12"><rect x="0" y="0" width="8" height="11" fill="#c4c4c4"/><rect x="9" y="0" width="8" height="5" fill="#c4c4c4"/><rect x="9" y="6" width="8" height="5" fill="#c4c4c4"/><path d="M26 3 L29 6 L32 3" stroke="#d0d0d0" stroke-width="1.4" fill="none"/></svg>
<div class="a" style="left:1569px;top:10px;width:1px;height:20px;background:#474747"></div>
<div class="t" style="left:1581px;top:14px;font-size:12px;color:#e8e8e8">Layout</div>
<svg style="left:1628px;top:16px" width="10" height="8"><path d="M1 2 L4.5 5.5 L8 2" stroke="#d0d0d0" stroke-width="1.4" fill="none"/></svg>
<div class="a" style="left:1650px;top:10px;width:1px;height:20px;background:#474747"></div>
<div class="a" style="left:1660px;top:10px;width:169px;height:21px;background:#474747;border:1px solid #3c3c3c;border-radius:2px"></div>
<svg style="left:1664px;top:13px" width="18" height="14" viewBox="0 0 18 14"><circle cx="9" cy="5.5" r="4" stroke="#c8c8c8" stroke-width="1.4" fill="none"/><path d="M6 8.5 L2 12.5" stroke="#c8c8c8" stroke-width="1.6"/><path d="M13 9 L15 11 L17 9 Z" fill="#c8c8c8"/></svg>
<div class="t" style="left:1684px;top:15px;font-size:11px;color:#9a9a9a">Search Adobe Stock</div>
<div class="a" style="left:1837px;top:3px;width:83px;height:20px;border:1px solid #474747;border-top:none;border-right:none"></div>
<div class="a" style="left:1865px;top:3px;width:1px;height:20px;background:#474747"></div>
<div class="a" style="left:1892px;top:3px;width:1px;height:20px;background:#474747"></div>
<div class="a" style="left:1845px;top:14px;width:10px;height:2px;background:#d0d0d0"></div>
<div class="a" style="left:1873px;top:9px;width:11px;height:9px;border:2px solid #d0d0d0"></div>
<svg style="left:1900px;top:8px" width="12" height="12"><path d="M1 1 L11 11 M11 1 L1 11" stroke="#d8d8d8" stroke-width="1.8"/></svg>

<!-- control.html -->
<div class="a" style="left:12px;top:37px;width:1908px;height:34px;background:#535353;border-top:1px solid #3e3e3e;border-left:1px solid #3e3e3e"></div>
<div class="a" style="left:17px;top:45px;width:2px;height:19px;background:repeating-linear-gradient(180deg,#6a6a6a 0 1px,transparent 1px 2px)"></div>
<div class="t" style="left:27px;top:50px;font-size:11px;color:#cfcfcf;letter-spacing:-0.5px">No Selection</div>
<div class="a" style="left:100px;top:42px;width:1px;height:24px;background:#474747"></div>
<div class="a" style="left:106px;top:44px;width:38px;height:21px;border:1px solid #474747;border-radius:2px"></div>
<div class="a" style="left:107px;top:45px;width:19px;height:19px;background:#000;border:1px solid #fff"></div>
<svg style="left:130px;top:51px" width="10" height="8"><path d="M1 1.5 L4.5 5 L8 1.5" stroke="#d8d8d8" stroke-width="1.4" fill="none"/></svg>
<div class="a" style="left:150px;top:44px;width:38px;height:21px;border:1px solid #474747;border-radius:2px"></div>
<div class="a" style="left:151px;top:45px;width:19px;height:19px;background:#fff"></div>
<svg style="left:151px;top:45px" width="19" height="19"><rect x="6.5" y="6.5" width="6" height="6" fill="none" stroke="#222" stroke-width="1"/><path d="M1 18 L18 1" stroke="#e01b1b" stroke-width="1.6"/></svg>
<svg style="left:174px;top:51px" width="10" height="8"><path d="M1 1.5 L4.5 5 L8 1.5" stroke="#d8d8d8" stroke-width="1.4" fill="none"/></svg>
<div class="t" style="left:201px;top:50px;font-size:11px;color:#d8d8d8;border-bottom:1px dotted #bbb;padding-bottom:1px">Stroke:</div>
<div class="a" style="left:238px;top:44px;width:82px;height:21px;border:1px solid #474747;border-radius:2px;background:#535353"></div>
<div class="a" style="left:256px;top:45px;width:46px;height:19px;background:#464646"></div>
<div class="a" style="left:302px;top:45px;width:1px;height:19px;background:#474747"></div>
<svg style="left:242px;top:46px" width="10" height="17"><path d="M1.5 5 L5 1.5 L8.5 5 M1.5 12 L5 15.5 L8.5 12" stroke="#d0d0d0" stroke-width="1.3" fill="none"/></svg>
<svg style="left:306px;top:51px" width="10" height="8"><path d="M1 1.5 L4.5 5 L8 1.5" stroke="#d8d8d8" stroke-width="1.4" fill="none"/></svg>
<div class="a" style="left:325px;top:44px;width:90px;height:21px;background:#7b7b7b"></div>
<svg style="left:420px;top:51px" width="10" height="8"><path d="M1 1.5 L4.5 5 L8 1.5" stroke="#6e6e6e" stroke-width="1.4" fill="none"/></svg>
<div class="a" style="left:439px;top:44px;width:106px;height:21px;border:1px solid #474747;border-radius:2px"></div>
<div class="a" style="left:440px;top:45px;width:91px;height:19px;background:#ebebeb"></div>
<div class="a" style="left:444px;top:49px;width:11px;height:11px;background:#000;border-radius:50%"></div>
<div class="t" style="left:464px;top:50px;font-size:11px;color:#111">Touch Callig...</div>
<svg style="left:534px;top:51px" width="10" height="8"><path d="M1 1.5 L4.5 5 L8 1.5" stroke="#d8d8d8" stroke-width="1.4" fill="none"/></svg>
<div class="t" style="left:552px;top:50px;font-size:11px;color:#d8d8d8;border-bottom:1px dotted #bbb;padding-bottom:1px">Opacity:</div>
<div class="a" style="left:594px;top:44px;width:67px;height:21px;border:1px solid #474747;border-radius:2px"></div>
<div class="a" style="left:595px;top:45px;width:50px;height:19px;background:#464646"></div>
<div class="t" style="left:598px;top:50px;font-size:11px;color:#eaeaea">100%</div>
<svg style="left:649px;top:50px" width="8" height="10"><path d="M2 1 L5.5 4.5 L2 8" stroke="#d8d8d8" stroke-width="1.4" fill="none"/></svg>
<div class="t" style="left:669px;top:50px;font-size:11px;color:#bdbdbd">Style:</div>
<div class="a" style="left:699px;top:44px;width:39px;height:21px;border:1px solid #474747;border-radius:2px"></div>
<div class="a" style="left:700px;top:45px;width:19px;height:19px;background:#e4e4e4"></div>
<svg style="left:723px;top:51px" width="10" height="8"><path d="M1 1.5 L4.5 5 L8 1.5" stroke="#d8d8d8" stroke-width="1.4" fill="none"/></svg>
<div class="a" style="left:744px;top:42px;width:1px;height:24px;background:#474747"></div>
<div class="a" style="left:750px;top:45px;width:93px;height:20px;border:1px solid #6e6e6e;border-radius:2px"></div>
<div class="t" style="left:759px;top:50px;font-size:11px;color:#e8e8e8">Document Setup</div>
<div class="a" style="left:848px;top:45px;width:71px;height:20px;border:1px solid #6e6e6e;border-radius:2px"></div>
<div class="t" style="left:857px;top:50px;font-size:11px;color:#e8e8e8">Preferences</div>
<svg style="left:928px;top:45px" width="34" height="20"><rect x="1.5" y="6.5" width="5" height="5" fill="none" stroke="#bdbdbd"/><rect x="10.5" y="1.5" width="5" height="5" fill="none" stroke="#bdbdbd"/><path d="M7 7 L7 17 L10 14 L14 17 Z" fill="#bdbdbd"/><path d="M23 4 L26 7 L29 4" stroke="#d0d0d0" stroke-width="1.4" fill="none"/></svg>
<svg style="left:1819px;top:45px" width="100" height="20"><g fill="#6f6f6f"><rect x="2" y="2" width="5" height="5"/><rect x="9" y="2" width="5" height="5"/><rect x="2" y="9" width="5" height="5"/><rect x="9" y="9" width="5" height="5"/></g><g fill="#d0d0d0"><rect x="27" y="1" width="3" height="14"/><rect x="32" y="4" width="4" height="3"/><path d="M36 4 h3 a3 3 0 0 1 0 8 h-3 v-3 h3 v-2 h-3 z"/></g><path d="M46 7 L49 10 L52 7" stroke="#7a7a7a" stroke-width="1.3" fill="none"/><g fill="#d6d6d6"><rect x="74" y="4" width="2" height="2"/><rect x="78" y="4" width="8" height="2"/><rect x="74" y="8" width="2" height="2"/><rect x="78" y="8" width="8" height="2"/><rect x="74" y="12" width="2" height="2"/><rect x="78" y="12" width="8" height="2"/></g></svg>

<!-- tabs.html -->
<div class="a" style="left:13px;top:71px;width:1618px;height:30px;background:#424242"></div>
<div class="a" style="left:1177px;top:71px;width:359px;height:30px;background:#535353"></div>
<div class="a" style="left:186px;top:71px;width:1px;height:30px;background:#383838"></div>
<div class="a" style="left:360px;top:71px;width:1px;height:30px;background:#383838"></div>
<div class="a" style="left:656px;top:71px;width:1px;height:30px;background:#383838"></div>
<div class="a" style="left:830px;top:71px;width:1px;height:30px;background:#383838"></div>
<div class="a" style="left:1003px;top:71px;width:1px;height:30px;background:#383838"></div>
<div class="a" style="left:1590px;top:71px;width:1px;height:30px;background:#383838"></div>
<div class="t" style="left:22px;top:81px;font-size:11px;color:#bdbdbd">1052.eps* @ 66.67% (RG...</div>
<div class="t" style="left:196px;top:81px;font-size:11px;color:#bdbdbd">20741658.eps* @ 100% (...</div>
<div class="t" style="left:370px;top:81px;font-size:11px;color:#bdbdbd">4Z_2101.w019.n001.436A.p30.436 [Converted].eps</div>
<div class="t" style="left:665px;top:81px;font-size:11px;color:#bdbdbd">2388 [Converted].eps* @...</div>
<div class="t" style="left:839px;top:81px;font-size:11px;color:#bdbdbd">logo1.pdf* @ 153.19% (C...</div>
<div class="t" style="left:1014px;top:81px;font-size:11px;color:#bdbdbd;unicode-bidi:bidi-override;direction:ltr">םינולב.ai @ 50% (RGB/GP...</div>
<div class="t" style="left:1188px;top:81px;font-size:11px;color:#f0f0f0;unicode-bidi:bidi-override;direction:ltr">14.6.20 והירכז -היינב תינכת.pdf* @ 400% (RGB/GPU Preview)</div>
<div class="t" style="left:1547px;top:81px;font-size:11px;color:#9a9a9a;unicode-bidi:bidi-override;direction:ltr">יוניב.pdf</div>
<svg style="left:0;top:0" width="1920" height="110"><g stroke="#c8c8c8" stroke-width="1.6"><path d="M173 83 l6 6 m0 -6 l-6 6"/><path d="M347 83 l6 6 m0 -6 l-6 6"/><path d="M642 83 l6 6 m0 -6 l-6 6"/><path d="M816 83 l6 6 m0 -6 l-6 6"/><path d="M989 83 l6 6 m0 -6 l-6 6"/><path d="M1163 83 l6 6 m0 -6 l-6 6"/></g><path d="M1523 83 l6 6 m0 -6 l-6 6" stroke="#f0f0f0" stroke-width="1.8"/><path d="M1613 81 l4 4 l-4 4 M1619 81 l4 4 l-4 4" stroke="#d8d8d8" stroke-width="1.3" fill="none"/></svg>

<!-- dock.html -->
<!-- scrollbar + dock background -->
<div class="a" style="left:1614px;top:101px;width:17px;height:1042px;background:#4a4a4a"></div><div class="a" style="left:1614px;top:1143px;width:17px;height:16px;background:#535353"></div>
<svg style="left:1618px;top:104px" width="10" height="8"><path d="M1 6 L5 2 L9 6" stroke="#8a8a8a" stroke-width="1.3" fill="none"/></svg>
<svg style="left:1618px;top:1129px" width="10" height="8"><path d="M1 2 L5 6 L9 2" stroke="#8a8a8a" stroke-width="1.3" fill="none"/></svg>
<div class="a" style="left:1630px;top:71px;width:290px;height:1089px;background:#383838"></div>
<div class="a" style="left:1632px;top:71px;width:288px;height:12px;background:#424242"></div>
<svg style="left:1655px;top:73px" width="12" height="8"><path d="M5 1 L2 4 L5 7 M10 1 L7 4 L10 7" stroke="#cfcfcf" stroke-width="1.3" fill="none"/></svg>
<svg style="left:1905px;top:73px" width="12" height="8"><path d="M2 1 L5 4 L2 7 M7 1 L10 4 L7 7" stroke="#cfcfcf" stroke-width="1.3" fill="none"/></svg>
<!-- icon column -->
<div class="pn" style="left:1633px;top:83px;width:37px;height:97px"></div>
<div class="pn" style="left:1633px;top:181px;width:37px;height:67px"></div>
<div class="pn" style="left:1633px;top:249px;width:37px;height:69px"></div>
<div class="pn" style="left:1633px;top:319px;width:37px;height:841px"></div>
<svg style="left:1633px;top:83px" width="37" height="240">
<g fill="#2e2e2e"><rect x="9" y="5" width="19" height="4"/><rect x="9" y="103" width="19" height="4"/><rect x="9" y="171" width="19" height="4"/></g>
<g fill="#535353"><rect x="10" y="5" width="1" height="4"/><rect x="12" y="5" width="1" height="4"/><rect x="14" y="5" width="1" height="4"/><rect x="16" y="5" width="1" height="4"/><rect x="18" y="5" width="1" height="4"/><rect x="20" y="5" width="1" height="4"/><rect x="22" y="5" width="1" height="4"/><rect x="24" y="5" width="1" height="4"/><rect x="26" y="5" width="1" height="4"/>
<rect x="10" y="103" width="1" height="4"/><rect x="12" y="103" width="1" height="4"/><rect x="14" y="103" width="1" height="4"/><rect x="16" y="103" width="1" height="4"/><rect x="18" y="103" width="1" height="4"/><rect x="20" y="103" width="1" height="4"/><rect x="22" y="103" width="1" height="4"/><rect x="24" y="103" width="1" height="4"/><rect x="26" y="103" width="1" height="4"/>
<rect x="10" y="171" width="1" height="4"/><rect x="12" y="171" width="1" height="4"/><rect x="14" y="171" width="1" height="4"/><rect x="16" y="171" width="1" height="4"/><rect x="18" y="171" width="1" height="4"/><rect x="20" y="171" width="1" height="4"/><rect x="22" y="171" width="1" height="4"/><rect x="24" y="171" width="1" height="4"/><rect x="26" y="171" width="1" height="4"/></g>
<text x="12" y="30" font-size="18" fill="#c8c8c8" font-family="Liberation Sans">A</text><rect x="26" y="14" width="1.2" height="18" fill="#c8c8c8"/>
<text x="12" y="59" font-size="17" font-weight="bold" fill="#c8c8c8" font-family="Liberation Sans">¶</text>
<text x="12" y="87" font-size="19" font-style="italic" fill="#c8c8c8" font-family="Liberation Serif">O</text>
<rect x="6.5" y="125.5" width="5" height="5" fill="none" stroke="#c8c8c8"/><rect x="9.5" y="128.5" width="5" height="5" fill="none" stroke="#c8c8c8"/><text x="16" y="128" font-size="14" fill="#c8c8c8" font-family="Liberation Sans">A</text>
<rect x="6.5" y="153.5" width="5" height="5" fill="none" stroke="#c8c8c8"/><rect x="9.5" y="156.5" width="5" height="5" fill="none" stroke="#c8c8c8"/><text x="15" y="157" font-size="14" font-weight="bold" fill="#c8c8c8" font-family="Liberation Sans">¶</text>
<path d="M11 186 L11 201 L26 201 L26 194 M17 186 L11 186 M19 184 L27 184 L27 192 M27 184 L18 193" stroke="#c8c8c8" stroke-width="1.6" fill="none"/>
<rect x="5" y="207" width="28" height="24" rx="2" fill="#363636"/>
<path d="M14 215 h-3 a4 4 0 0 0 0 8 h5 a4 4 0 0 0 4 -4 M23 223 h3 a4 4 0 0 0 0 -8 h-5 a4 4 0 0 0 -4 4" stroke="#d0d0d0" stroke-width="1.8" fill="none"/>
</svg>
<!-- main column panels -->
<div class="pn" style="left:1673px;top:83px;width:247px;height:203px"></div>
<div class="a" style="left:1673px;top:83px;width:247px;height:27px;background:#424242"></div>
<div class="a" style="left:1740px;top:83px;width:49px;height:27px;background:#535353"></div>
<div class="t" style="left:1682px;top:92px;font-size:11px;color:#bcbcbc">Transform</div>
<svg style="left:1745px;top:90px" width="8" height="12"><path d="M1 4.5 L4 1.5 L7 4.5 M1 7.5 L4 10.5 L7 7.5" stroke="#a8a8a8" stroke-width="1.1" fill="none"/></svg>
<div class="t" style="left:1755px;top:92px;font-size:11px;font-weight:bold;color:#f2f2f2;letter-spacing:-0.45px">Align</div>
<svg style="left:1906px;top:92px" width="13" height="10"><path d="M0 1 H12 M0 5 H12 M0 9 H12" stroke="#c8c8c8" stroke-width="1.2"/></svg>
<div class="t" style="left:1678px;top:121px;font-size:10px;color:#c8c8c8">Align Objects:</div>
<div class="t" style="left:1678px;top:180px;font-size:10px;color:#c8c8c8">Distribute Objects:</div>
<div class="t" style="left:1678px;top:239px;font-size:10px;color:#c8c8c8">Distribute Spacing:</div>
<div class="t" style="left:1879px;top:239px;font-size:10px;color:#c8c8c8">Align To:</div>
<div class="a" style="left:1678px;top:169px;width:240px;height:2px;background:#474747"></div>
<div class="a" style="left:1678px;top:228px;width:240px;height:2px;background:#474747"></div>
<div class="a" style="left:1847px;top:235px;width:2px;height:47px;background:#4a4a4a"></div>
<svg style="left:1673px;top:110px" width="247" height="176">
<g fill="#c8c8c8">
<rect x="10" y="31" width="1" height="17"/><rect x="12" y="33" width="8" height="5"/><rect x="12" y="40" width="14" height="5"/>
<rect x="53" y="31" width="1" height="17"/><rect x="49" y="33" width="9" height="5"/><rect x="46" y="40" width="15" height="5"/>
<rect x="96" y="31" width="1" height="17"/><rect x="87" y="33" width="8" height="5"/><rect x="81" y="40" width="14" height="5"/>
<rect x="150" y="32" width="18" height="1"/><rect x="156" y="34" width="5" height="14"/><rect x="163" y="34" width="5" height="8"/>
<rect x="187" y="40" width="18" height="1"/><rect x="191" y="33" width="5" height="14"/><rect x="198" y="36" width="5" height="8"/>
<rect x="225" y="48" width="18" height="1"/><rect x="230" y="33" width="5" height="14"/><rect x="237" y="39" width="5" height="8"/>
<rect x="9" y="91" width="18" height="1"/><rect x="12" y="93" width="12" height="4"/><rect x="12" y="99" width="12" height="4"/><rect x="9" y="104" width="18" height="1"/>
<rect x="45" y="94" width="18" height="1"/><rect x="48" y="91" width="12" height="4"/><rect x="48" y="99" width="12" height="4"/><rect x="45" y="101" width="18" height="1"/>
<rect x="82" y="104" width="18" height="1"/><rect x="85" y="92" width="12" height="4"/><rect x="85" y="98" width="12" height="5"/><rect x="82" y="98" width="18" height="1" fill="#535353"/>
<rect x="150" y="90" width="1" height="17"/><rect x="152" y="93" width="4" height="12"/><rect x="158" y="94" width="4" height="8"/>
<rect x="188" y="90" width="1" height="17"/><rect x="186" y="93" width="5" height="12"/><rect x="194" y="90" width="1" height="17"/><rect x="192" y="94" width="5" height="8"/>
<rect x="240" y="90" width="1" height="17"/><rect x="227" y="93" width="4" height="12"/><rect x="233" y="94" width="4" height="8"/>
<rect x="9" y="152" width="2" height="10"/><rect x="13" y="149" width="8" height="5"/><rect x="13" y="158" width="12" height="5"/>
<rect x="45" y="152" width="4" height="13"/><rect x="51" y="155" width="5" height="8"/><rect x="44" y="148" width="10" height="1"/>
</g>
<rect x="67" y="149" width="77" height="20" fill="#4e4e4e"/><rect x="85" y="149" width="1" height="20" fill="#474747"/>
<path d="M71 156 L75 152 L79 156 M71 162 L75 166 L79 162" stroke="#6a6a6a" stroke-width="1.1" fill="none"/>
<text x="90" y="163" font-size="10" fill="#6e6e6e" font-family="Liberation Sans">0 mm</text>
<path d="M218.5 155.5 L228.5 155.5 L231.5 158.5 L231.5 167.5 L218.5 167.5 Z" fill="#c8c8c8"/><path d="M216 151 h4 M218 149 v4" stroke="#c8c8c8" stroke-width="1"/><path d="M233 160 L236 163 L239 160" stroke="#c8c8c8" stroke-width="1.2" fill="none"/>
</svg>
<!-- swatches -->
<div class="pn" style="left:1673px;top:290px;width:247px;height:178px"></div>
<div class="a" style="left:1673px;top:290px;width:247px;height:27px;background:#424242"></div>
<div class="a" style="left:1673px;top:290px;width:62px;height:27px;background:#535353"></div>
<div class="a" style="left:1779px;top:290px;width:1px;height:27px;background:#3a3a3a"></div>
<div class="a" style="left:1854px;top:290px;width:1px;height:27px;background:#3a3a3a"></div>
<div class="t" style="left:1682px;top:299px;font-size:11px;font-weight:bold;color:#f2f2f2;letter-spacing:-0.45px">Swatches</div>
<div class="t" style="left:1744px;top:299px;font-size:11px;color:#bcbcbc">Color</div>
<div class="t" style="left:1788px;top:299px;font-size:11px;color:#bcbcbc">Color Guide</div>
<svg style="left:1906px;top:299px" width="13" height="10"><path d="M0 1 H12 M0 5 H12 M0 9 H12" stroke="#c8c8c8" stroke-width="1.2"/></svg>
<svg style="left:1673px;top:317px" width="247" height="152">
<rect x="15.5" y="16.5" width="19" height="19" fill="#fff" stroke="#3a3a3a"/><rect x="19.5" y="20.5" width="11" height="11" fill="none" stroke="#222"/><path d="M16 35 L34 17" stroke="#e01b1b" stroke-width="2"/>
<rect x="6" y="7" width="19" height="19" fill="#000" stroke="#fff" stroke-width="1.2"/>
<rect x="196" y="7" width="48" height="23" rx="2" fill="#4b4b4b" stroke="#474747"/><rect x="221" y="7" width="23" height="23" rx="2" fill="#333"/>
<g fill="#d0d0d0"><rect x="202" y="12" width="11" height="2"/><rect x="202" y="16" width="11" height="2"/><rect x="202" y="20" width="11" height="2"/><rect x="202" y="24" width="11" height="2"/>
<rect x="226" y="12" width="3" height="3"/><rect x="230" y="12" width="3" height="3"/><rect x="234" y="12" width="3" height="3"/><rect x="226" y="16" width="3" height="3"/><rect x="230" y="16" width="3" height="3"/><rect x="234" y="16" width="3" height="3"/><rect x="226" y="20" width="3" height="3"/><rect x="230" y="20" width="3" height="3"/><rect x="234" y="20" width="3" height="3"/></g>
<rect x="5.5" y="41.5" width="238" height="89" fill="none" stroke="#5c5c5c"/>
<rect x="6" y="42" width="13" height="13" fill="#fff"/><path d="M6 55 L19 42" stroke="#e01b1b" stroke-width="1.6"/>
<rect x="20" y="42" width="13" height="13" fill="#eee"/><circle cx="26.5" cy="48.5" r="3.5" fill="none" stroke="#777" stroke-width="0.8"/><path d="M20 48.5 h13 M26.5 42 v13" stroke="#777" stroke-width="0.6"/>
<rect x="34" y="42" width="13" height="13" fill="#8a6a36"/><path d="M47 42 L47 55 L34 55 Z" fill="#000"/><path d="M47 46 L47 55 L38 55 Z" fill="#fff"/>
<rect x="48" y="42" width="13" height="13" fill="url(#gold)"/>
<rect x="62" y="42" width="13" height="13" fill="#0e1856"/><path d="M75 46 L75 55 L66 55 Z" fill="#fff"/><circle cx="71" cy="52" r="1" fill="#000"/>
<rect x="76" y="42" width="13" height="13" fill="#3cb7ee"/><path d="M89 46 L89 55 L80 55 Z" fill="#fff"/><circle cx="85" cy="52" r="1" fill="#000"/>
<defs><linearGradient id="gold"><stop offset="0" stop-color="#8c6631"/><stop offset="0.5" stop-color="#e0b98a"/><stop offset="1" stop-color="#6b4a22"/></linearGradient></defs>
<g fill="#c8c8c8"><rect x="11" y="136" width="2" height="10"/><rect x="14" y="136" width="2" height="10"/><path d="M17 136 l3 0 l4 10 l-3 0 z"/><path d="M24 146 l2 2 l2 -2 z"/></g>
<circle cx="44" cy="141.5" r="3.5" fill="none" stroke="#c8c8c8" stroke-width="1.4"/><circle cx="44" cy="141.5" r="1.2" fill="#c8c8c8"/><path d="M47 137 L49 135 M47 146 L49 148" stroke="#c8c8c8" stroke-width="1.3"/>
<path d="M62 145 a4 4 0 0 1 3 -7 a6 6 0 0 1 11 0 a4 4 0 0 1 3 7 z" fill="#6e6e6e"/><path d="M60 142 h5" stroke="#6e6e6e" stroke-width="1.2"/>
<g fill="#c8c8c8"><rect x="106" y="135" width="3" height="3"/><rect x="110" y="135" width="3" height="3"/><rect x="114" y="135" width="3" height="3"/><rect x="106" y="139" width="3" height="3"/><rect x="114" y="139" width="3" height="3"/><rect x="106" y="143" width="3" height="3"/><rect x="110" y="143" width="3" height="3"/><path d="M118 145 l2 2 l2 -2 z"/></g>
<rect x="133.5" y="136.5" width="11" height="11" fill="none" stroke="#777"/><path d="M136 140 h6 M136 143 h6" stroke="#777"/>
<path d="M158 137 h5 l2 2 h7 v8 h-14 z" fill="#c8c8c8"/>
<path d="M186 136 h10 v11 h-7 v-4 h-3 z" fill="#c8c8c8"/>
<path d="M211 138 h11 M214 138 v-2 h5 v2 M212.5 139 v9 h8 v-9" stroke="#777" stroke-width="1.2" fill="none"/>
</svg>
<!-- stroke -->
<div class="pn" style="left:1673px;top:471px;width:247px;height:216px"></div>
<div class="a" style="left:1673px;top:471px;width:247px;height:27px;background:#424242"></div>
<div class="a" style="left:1673px;top:471px;width:56px;height:27px;background:#535353"></div>
<svg style="left:1678px;top:478px" width="8" height="12"><path d="M1 4.5 L4 1.5 L7 4.5 M1 7.5 L4 10.5 L7 7.5" stroke="#a8a8a8" stroke-width="1.1" fill="none"/></svg>
<div class="t" style="left:1688px;top:480px;font-size:11px;font-weight:bold;color:#f2f2f2;letter-spacing:-0.45px">Stroke</div>
<svg style="left:1906px;top:480px" width="13" height="10"><path d="M0 1 H12 M0 5 H12 M0 9 H12" stroke="#c8c8c8" stroke-width="1.2"/></svg>
<div class="t" style="left:1701px;top:510px;font-size:10.5px;color:#d0d0d0">Weight:</div>
<div class="a" style="left:1739px;top:505px;width:86px;height:19px;border:1px solid #474747;border-radius:2px"></div>
<div class="a" style="left:1757px;top:506px;width:50px;height:17px;background:#4a4a4a"></div>
<svg style="left:1743px;top:507px" width="10" height="15"><path d="M1.5 4.5 L5 1.5 L8.5 4.5 M1.5 10.5 L5 13.5 L8.5 10.5" stroke="#d0d0d0" stroke-width="1.3" fill="none"/></svg>
<svg style="left:1810px;top:511px" width="10" height="8"><path d="M1 1.5 L4.5 5 L8 1.5" stroke="#d8d8d8" stroke-width="1.4" fill="none"/></svg>
<div class="t" style="left:1714px;top:537px;font-size:10.5px;color:#7a7a7a">Cap:</div>
<div class="t" style="left:1702px;top:564px;font-size:10.5px;color:#7a7a7a">Corner:</div>
<div class="t" style="left:1679px;top:591px;font-size:10.5px;color:#7a7a7a">Align Stroke:</div>
<div class="t" style="left:1843px;top:564px;font-size:10.5px;color:#7a7a7a">Limit:</div>
<div class="a" style="left:1871px;top:558px;width:39px;height:20px;background:#5a5a5a"></div>
<div class="t" style="left:1911px;top:565px;font-size:10px;color:#777">x</div>
<svg style="left:1738px;top:530px" width="70" height="78">
<g fill="none" stroke="#484848"><rect x="0.5" y="0.5" width="67" height="20" rx="2"/><rect x="0.5" y="27.5" width="67" height="20" rx="2"/><rect x="0.5" y="54.5" width="67" height="20" rx="2"/><path d="M23 0 v21 M45 0 v21 M23 27 v21 M45 27 v21 M23 54 v21 M45 54 v21"/></g>
<g fill="#6e6e6e">
<path d="M9 5 H17 V18 H9 V12 H8 V9 H9 Z"/><circle cx="7.5" cy="10.5" r="1.6" fill="none" stroke="#6e6e6e" stroke-width="1"/>
<path d="M37 5 H40 V18 H37 A6.5 6.5 0 0 1 37 5 Z"/><rect x="33" y="9.5" width="7" height="2.5" fill="#535353"/>
<path d="M51 5 H62 V18 H51 Z"/><rect x="55" y="9.5" width="7" height="2.5" fill="#535353"/>
<path d="M6 33 H18 V39 H13 V46 H6 Z M15 41 H18 V46 H15 Z"/>
<path d="M35 33 H41 V39 H35 V46 H29 V39 A6 6 0 0 1 35 33 Z M38 41 H41 V46 H38 Z"/>
<path d="M55 33 H63 V39 H57 V46 H51 V37 Z M60 41 H63 V46 H60 Z"/>
<path d="M6 59 H9 V68 H18 V72 H6 Z"/><path d="M11 59 V66 H18" fill="none" stroke="#6e6e6e" stroke-width="1"/>
<path d="M32 60 V69 H41 V73 H32 Z" /><path d="M30 58 V74 H42" fill="none" stroke="#6e6e6e" stroke-width="1"/><rect x="34" y="59" width="3" height="9"/>
<path d="M51 59 H57 V66 H63 V72 H51 Z"/><path d="M58 58 V65 H64" fill="none" stroke="#6e6e6e" stroke-width="1"/>
</g>
</svg>
<div class="a" style="left:1679px;top:611px;width:238px;height:2px;background:#474747"></div>
<div class="a" style="left:1679px;top:622px;width:12px;height:12px;background:#d0d0d0;border-radius:2px"></div>
<div class="a" style="left:1682px;top:627px;width:6px;height:2px;background:#535353"></div>
<div class="t" style="left:1696px;top:624px;font-size:10.5px;color:#e8e8e8">Dashed Line</div>
<div class="a" style="left:1841px;top:619px;width:76px;height:21px;border:1px solid #474747;border-radius:2px"></div>
<div class="a" style="left:1879px;top:619px;width:1px;height:21px;background:#474747"></div>
<svg style="left:1841px;top:619px" width="76" height="21"><path d="M6 7 v-2 h4 M14 5 h8 M26 5 h6 v2 M6 13 v3 h8 M18 16 h8 M30 16 h2 v-3" stroke="#6a6a6a" stroke-width="1.2" fill="none"/><path d="M44 7 v-2 h4 M53 5 h8 M66 5 h4 v2 M44 13 v3 h4 M53 16 h8 M66 16 h4 v-3" stroke="#6a6a6a" stroke-width="1.2" fill="none"/></svg>
<svg style="left:1679px;top:644px" width="240" height="36">
<g fill="#585858"><rect x="1" y="1" width="34" height="20" rx="2"/><rect x="41" y="1" width="34" height="20" rx="2"/><rect x="81" y="1" width="34" height="20" rx="2"/><rect x="121" y="1" width="34" height="20" rx="2"/><rect x="161" y="1" width="34" height="20" rx="2"/><rect x="202" y="1" width="34" height="20" rx="2"/></g>
<g font-size="10" fill="#6e6e6e" font-family="Liberation Sans"><text x="7" y="34">dash</text><text x="50" y="34">gap</text><text x="87" y="34">dash</text><text x="130" y="34">gap</text><text x="167" y="34">dash</text><text x="211" y="34">gap</text></g>
</svg>
<!-- libraries -->
<div class="pn" style="left:1673px;top:690px;width:247px;height:470px"></div>
<div class="a" style="left:1673px;top:690px;width:247px;height:27px;background:#424242"></div>
<div class="a" style="left:1787px;top:690px;width:58px;height:27px;background:#535353"></div>
<div class="a" style="left:1739px;top:690px;width:1px;height:27px;background:#3a3a3a"></div>
<div class="t" style="left:1682px;top:699px;font-size:11px;color:#bcbcbc">Artboards</div>
<div class="t" style="left:1748px;top:699px;font-size:11px;color:#bcbcbc">Layers</div>
<div class="t" style="left:1796px;top:699px;font-size:11px;font-weight:bold;color:#f2f2f2;letter-spacing:-0.45px">Libraries</div>
<svg style="left:1906px;top:699px" width="13" height="10"><path d="M0 1 H12 M0 5 H12 M0 9 H12" stroke="#c8c8c8" stroke-width="1.2"/></svg>
<svg style="left:1679px;top:727px" width="14" height="14"><circle cx="5.5" cy="5.5" r="4" stroke="#d8d8d8" stroke-width="1.5" fill="none"/><path d="M8.5 8.5 L12 12" stroke="#d8d8d8" stroke-width="1.7"/></svg>
<div class="t" style="left:1696px;top:729px;font-size:10.5px;font-style:italic;color:#8a8a8a">Search libraries and Adobe Stock</div>
<div class="a" style="left:1681px;top:744px;width:234px;height:1px;background:#6a6a6a"></div>
<div class="a" style="left:1681px;top:753px;width:234px;height:19px;background:#474747;border:1px solid #3e3e3e;border-radius:2px"></div>
<div class="t" style="left:1692px;top:757px;font-size:11px;color:#f0f0f0">My Library</div>
<svg style="left:1900px;top:759px" width="10" height="8"><path d="M1 1.5 L4.5 5 L8 1.5" stroke="#e8e8e8" stroke-width="1.5" fill="none"/></svg>
<div class="t" style="left:1681px;top:783px;font-size:11px;color:#f0f0f0">View by type</div>
<svg style="left:1746px;top:786px" width="10" height="8"><path d="M1 1.5 L4.5 5 L8 1.5" stroke="#e8e8e8" stroke-width="1.5" fill="none"/></svg>
<div class="a" style="left:1873px;top:779px;width:18px;height:18px;background:#3e3e3e;border-radius:2px"></div>
<svg style="left:1873px;top:779px" width="45" height="18"><g fill="#e0e0e0"><rect x="3" y="3" width="5" height="5"/><rect x="10" y="3" width="5" height="5"/><rect x="3" y="10" width="5" height="5"/><rect x="10" y="10" width="5" height="5"/>
<rect x="25" y="4" width="2" height="2"/><rect x="29" y="4" width="10" height="1.5"/><rect x="25" y="8.5" width="2" height="2"/><rect x="29" y="9" width="10" height="1.5"/><rect x="25" y="13" width="2" height="2"/><rect x="29" y="13.5" width="10" height="1.5"/></g></svg>
<div class="a" style="left:1673px;top:803px;width:247px;height:1px;background:#474747"></div>
<svg style="left:1680px;top:815px" width="10" height="8"><path d="M1 1.5 L4.5 5 L8 1.5" stroke="#c8c8c8" stroke-width="1.4" fill="none"/></svg>
<div class="t" style="left:1693px;top:814px;font-size:11px;color:#c8c8c8">Colors</div>
<div class="a" style="left:1908px;top:812px;width:9px;height:320px;background:#4c4c4c"></div>
<div class="a" style="left:1909px;top:820px;width:7px;height:16px;background:#6a6a6a"></div>
<svg style="left:1908px;top:804px" width="10" height="8"><path d="M1 6 L5 2 L9 6" stroke="#777" stroke-width="1.1" fill="none"/></svg>
<svg style="left:1908px;top:1121px" width="10" height="8"><path d="M1 2 L5 6 L9 2" stroke="#777" stroke-width="1.1" fill="none"/></svg>
<svg style="left:1680px;top:829px" width="204" height="290">
<g stroke="#3e3e3e" stroke-width="1">
<rect x="2.5" y="2.5" width="62" height="52" rx="3" fill="#40b8ee"/><rect x="70.5" y="2.5" width="62" height="52" rx="3" fill="#0c1852"/><rect x="138.5" y="2.5" width="62" height="52" rx="3" fill="#45aae4"/>
<rect x="2.5" y="60.5" width="62" height="52" rx="3" fill="#1e3444"/><rect x="70.5" y="60.5" width="62" height="52" rx="3" fill="#c9a65a"/><rect x="138.5" y="60.5" width="62" height="52" rx="3" fill="#43b4ea"/>
<rect x="2.5" y="118.5" width="62" height="52" rx="3" fill="#3c6fea"/><rect x="70.5" y="118.5" width="62" height="52" rx="3" fill="#48ceeb"/><rect x="138.5" y="118.5" width="62" height="52" rx="3" fill="#43b4ea"/>
<rect x="2.5" y="176.5" width="62" height="52" rx="3" fill="#3c74e8"/><rect x="70.5" y="176.5" width="62" height="52" rx="3" fill="#ffffff"/><rect x="138.5" y="176.5" width="62" height="52" rx="3" fill="#432e6e"/>
<rect x="2.5" y="234.5" width="62" height="52" rx="3" fill="#2a0a4e"/>
</g>
<rect x="3" y="40" width="61" height="14" fill="#6e6e6e"/>
<text x="5" y="51" font-size="10.5" font-weight="bold" fill="#f0f0f0" font-family="Liberation Sans">R=0 G=1...</text>
</svg>
<div class="a" style="left:1673px;top:1134px;width:247px;height:26px;background:#4a4a4a"></div>
<svg style="left:1673px;top:1134px" width="247" height="26">
<path d="M10 13 h13 M16.5 6.5 v13" stroke="#d8d8d8" stroke-width="1.8"/><path d="M22 18 l2 2 l2 -2 z" fill="#d8d8d8"/>
<path d="M33 8 h6 l2 2 h9 v10 h-17 z" fill="#cfcfcf"/>
<text x="154" y="17" font-size="10" fill="#dcdcdc" font-family="Liberation Sans">-- KB</text>
<path d="M189 18 a4 4 0 0 1 3 -7 a6 6 0 0 1 11 0 a4 4 0 0 1 3 7 z" fill="#c8c8c8"/>
<path d="M218 8 h11 M221 8 v-2 h5 v2 M219.5 9 v10 h8 v-10 M222 11 v6 M225 11 v6" stroke="#cfcfcf" stroke-width="1.2" fill="none"/>
</svg>

<!-- floating.html -->
<!-- Links panel -->
<div class="a" style="left:1390px;top:247px;width:242px;height:224px;background:#535353;border:1px solid #3a3a3a;box-shadow:0 0 3px rgba(0,0,0,0.25)"></div>
<div class="a" style="left:1390px;top:247px;width:242px;height:30px;background:#424242;border-top:2px solid #383838"></div>
<div class="a" style="left:1468px;top:249px;width:43px;height:28px;background:#535353"></div>
<div class="t" style="left:1400px;top:259px;font-size:11px;color:#aeaeae">Asset Export</div>
<div class="t" style="left:1477px;top:259px;font-size:11px;font-weight:bold;color:#f2f2f2;letter-spacing:-0.45px">Links</div>
<svg style="left:1590px;top:257px" width="40" height="12"><path d="M1 1 L5 5 L1 9 M6 1 L10 5 L6 9" stroke="#d0d0d0" stroke-width="1.3" fill="none"/><rect x="16.5" y="0" width="1.2" height="11" fill="#bdbdbd"/><path d="M24 2 H34 M24 5.5 H34 M24 9 H34" stroke="#d0d0d0" stroke-width="1.1"/></svg>
<div class="a" style="left:1397px;top:284px;width:229px;height:158px;border:1px solid #5e5e5e;border-radius:3px"></div>
<div class="a" style="left:1398px;top:317px;width:227px;height:1px;background:#5e5e5e"></div>
<div class="a" style="left:1404px;top:288px;width:19px;height:25px;background:#fff"></div>
<svg style="left:1404px;top:288px" width="19" height="25"><circle cx="9.5" cy="10" r="6.5" fill="none" stroke="#b0895a" stroke-width="1"/><path d="M6 15 L9.5 6 L12 12 L7 14 Z" fill="none" stroke="#8a6a3a" stroke-width="0.9"/><rect x="3" y="19" width="13" height="1.3" fill="#333"/><rect x="3" y="22" width="13" height="1.3" fill="#555"/></svg>
<svg style="left:1604px;top:294px" width="12" height="12"><rect x="0" y="0" width="12" height="12" fill="#c8c8c8"/><rect x="1.5" y="5" width="5.5" height="5.5" fill="#555"/><path d="M5 5 L8 1 L11 5 Z" fill="#555"/></svg>
<!-- Gradient panel -->
<div class="a" style="left:1331px;top:581px;width:80px;height:265px;background:#535353;border:1px solid #3a3a3a;box-shadow:0 0 3px rgba(0,0,0,0.3)"></div>
<div class="a" style="left:1332px;top:582px;width:78px;height:13px;background:#424242"></div>
<svg style="left:1336px;top:603px" width="8" height="12"><path d="M1 4.5 L4 1.5 L7 4.5 M1 7.5 L4 10.5 L7 7.5" stroke="#a8a8a8" stroke-width="1.1" fill="none"/></svg>
<div class="t" style="left:1347px;top:604px;font-size:11px;font-weight:bold;color:#f2f2f2;letter-spacing:-0.45px">Gradient</div>
<div class="a" style="left:1337px;top:628px;width:32px;height:32px;background:linear-gradient(90deg,#fff,#000);border:1px solid #3a3a3a"></div>
<svg style="left:1372px;top:641px" width="8" height="5"><path d="M0 0 H7 L3.5 4 Z" fill="#c8c8c8"/></svg>
<div class="a" style="left:1391px;top:636px;width:1px;height:12px;background:#bdbdbd"></div>
<div class="a" style="left:1348px;top:676px;width:13px;height:18px;background:#fff"></div>
<svg style="left:1348px;top:676px" width="13" height="18"><path d="M0 18 L13 2" stroke="#e01b1b" stroke-width="1.8"/></svg>
<div class="a" style="left:1338px;top:666px;width:19px;height:19px;background:#000;border:1px solid #fff"></div>
<svg style="left:1342px;top:704px" width="18" height="16"><rect x="1.5" y="1.5" width="9" height="6" fill="#6a6a6a" stroke="#777"/><rect x="6.5" y="8.5" width="9" height="6" fill="#6a6a6a" stroke="#777"/><path d="M12 3 L16 3 L14 6 Z M1 12 L5 9 L5 14 Z" fill="#777"/></svg>
<div class="a" style="left:1347px;top:752px;width:13px;height:15px;background:#fff;border:1px solid #444"></div>
<svg style="left:1342px;top:800px" width="16" height="18"><path d="M2 16 L10 8 M9 4 L14 9 M11 2 L16 7 L13 10 L8 5 Z" stroke="#6a6a6a" stroke-width="2" fill="#6a6a6a"/></svg>
<!-- Brush / Pathfinder panel -->
<div class="a" style="left:1360px;top:648px;width:242px;height:423px;background:#535353;border:1px solid #3a3a3a;box-shadow:0 0 3px rgba(0,0,0,0.3)"></div>
<div class="a" style="left:1361px;top:649px;width:240px;height:13px;background:#424242"></div>
<div class="a" style="left:1361px;top:662px;width:240px;height:26px;background:#424242"></div>
<div class="a" style="left:1361px;top:662px;width:60px;height:26px;background:#535353"></div>
<div class="t" style="left:1370px;top:670px;font-size:11px;font-weight:bold;color:#f2f2f2;letter-spacing:-0.45px">Brush</div>
<div class="a" style="left:1367px;top:695px;width:40px;height:32px;background:#e6e6e6"></div>
<div class="a" style="left:1367px;top:728px;width:40px;height:32px;background:#e6e6e6"></div>
<div class="a" style="left:1377px;top:704px;width:12px;height:12px;background:#000;border-radius:50%"></div>
<div class="a" style="left:1372px;top:743px;width:30px;height:2px;background:#000"></div>
<div class="a" style="left:1366px;top:688px;width:231px;height:216px;border:1px solid #5e5e5e;border-radius:2px"></div>
<svg style="left:1584px;top:893px" width="10" height="8"><path d="M1 2 L5 6 L9 2" stroke="#666" stroke-width="1.1" fill="none"/></svg>
<svg style="left:1366px;top:906px" width="240" height="16">
<g fill="#c8c8c8"><rect x="5" y="2" width="2" height="10"/><rect x="8" y="2" width="2" height="10"/><path d="M11 2 l3 0 l4 10 l-3 0 z"/><path d="M17 12 l2 2 l2 -2 z"/></g>
<path d="M27 5 h5 l2 2 h5 v6 h-12 z" fill="#c8c8c8"/><circle cx="36" cy="11" r="4" fill="none" stroke="#c8c8c8" stroke-width="1.4"/><circle cx="39" cy="11" r="4" fill="none" stroke="#c8c8c8" stroke-width="1.4"/>
<path d="M121 3 L133 14 M133 3 L121 14" stroke="#6e6e6e" stroke-width="2"/>
<rect x="146.5" y="3.5" width="11" height="10" fill="none" stroke="#6e6e6e"/><path d="M149 7 h6 M149 10 h6" stroke="#6e6e6e"/>
<path d="M171 3 h11 v11 h-7 v-4 h-4 z" fill="#d0d0d0"/>
<path d="M196 5 h11 M199 5 v-2 h5 v2 M197.5 6 v9 h8 v-9" stroke="#6e6e6e" stroke-width="1.2" fill="none"/>
</svg>
<div class="a" style="left:1361px;top:924px;width:240px;height:2px;background:#3a3a3a"></div>
<div class="a" style="left:1361px;top:926px;width:240px;height:27px;background:#424242"></div>
<div class="a" style="left:1361px;top:926px;width:68px;height:27px;background:#535353"></div>
<div class="a" style="left:1514px;top:926px;width:1px;height:27px;background:#3a3a3a"></div>
<div class="t" style="left:1366px;top:934px;font-size:11px;font-weight:bold;color:#f2f2f2;letter-spacing:-0.45px">Pathfinder</div>
<div class="t" style="left:1438px;top:934px;font-size:11px;color:#bcbcbc">Graphic Styles</div>
<svg style="left:1583px;top:934px" width="13" height="10"><path d="M0 1 H12 M0 5 H12 M0 9 H12" stroke="#c8c8c8" stroke-width="1.2"/></svg>
<div class="t" style="left:1366px;top:963px;font-size:10.5px;color:#c8c8c8">Shape Modes:</div>
<div class="t" style="left:1366px;top:1015px;font-size:10.5px;color:#c8c8c8">Pathfinders:</div>
<div class="a" style="left:1515px;top:983px;width:71px;height:19px;background:#585858;border-radius:2px"></div>
<div class="t" style="left:1534px;top:988px;font-size:10.5px;color:#787878">Expand</div>
<svg style="left:1361px;top:980px" width="240" height="80">
<g fill="#c8c8c8">
<rect x="11" y="5" width="10" height="10"/><rect x="16" y="10" width="10" height="10"/>
<rect x="48" y="5" width="10" height="10"/><rect x="53.5" y="10.5" width="9" height="9" fill="#535353" stroke="#c8c8c8"/>
</g>
<g fill="none" stroke="#c8c8c8" stroke-width="1.5">
<rect x="85.5" y="5.5" width="9" height="9"/><rect x="90.5" y="10.5" width="9" height="9"/>
<rect x="122.5" y="5.5" width="9" height="9"/><rect x="127.5" y="10.5" width="9" height="9"/>
</g>
<rect x="91" y="11" width="3" height="3" fill="#c8c8c8"/><rect x="123" y="6" width="9" height="4" fill="#c8c8c8"/><rect x="123" y="6" width="4" height="9" fill="#c8c8c8"/><rect x="132" y="15" width="5" height="5" fill="#c8c8c8"/><rect x="127" y="15" width="10" height="4" fill="#c8c8c8"/>
<g fill="none" stroke="#c8c8c8" stroke-width="1.5">
<rect x="14.5" y="57.5" width="9" height="9"/><rect x="18.5" y="61.5" width="9" height="9"/>
<rect x="51.5" y="57.5" width="9" height="9"/>
<rect x="125.5" y="57.5" width="9" height="9"/><rect x="130.5" y="62.5" width="9" height="9"/>
<rect x="163.5" y="57.5" width="9" height="9"/><rect x="168.5" y="62.5" width="9" height="9"/>
<rect x="201.5" y="57.5" width="9" height="9"/>
</g>
<g fill="#c8c8c8"><rect x="55" y="61" width="10" height="10"/><rect x="88" y="57" width="10" height="10"/><rect x="93" y="62" width="10" height="10"/><rect x="205" y="61" width="10" height="10"/><rect x="131" y="63" width="4" height="4"/></g>
</svg>
<div class="a" style="left:1361px;top:1063px;width:240px;height:8px;background:#474747"></div>
<div class="a" style="left:1470px;top:1065px;width:22px;height:4px;background:repeating-linear-gradient(90deg,#2e2e2e 0 1px,transparent 1px 2px)"></div>
<!-- Transparency -->
<div class="a" style="left:1396px;top:445px;width:232px;height:146px;background:#535353;border:1px solid #3a3a3a;box-shadow:0 0 3px rgba(0,0,0,0.3)"></div>
<div class="a" style="left:1397px;top:446px;width:230px;height:12px;background:#424242"></div>
<svg style="left:1598px;top:447px" width="28" height="10"><path d="M5 1 L2 4.5 L5 8 M10 1 L7 4.5 L10 8" stroke="#cfcfcf" stroke-width="1.3" fill="none"/><path d="M19 1.5 L25 7.5 M25 1.5 L19 7.5" stroke="#d8d8d8" stroke-width="1.8"/></svg>
<div class="a" style="left:1397px;top:458px;width:230px;height:28px;background:#424242"></div>
<div class="a" style="left:1397px;top:458px;width:86px;height:28px;background:#535353"></div>
<svg style="left:1401px;top:466px" width="8" height="12"><path d="M1 4.5 L4 1.5 L7 4.5 M1 7.5 L4 10.5 L7 7.5" stroke="#a8a8a8" stroke-width="1.1" fill="none"/></svg>
<div class="t" style="left:1412px;top:467px;font-size:11px;font-weight:bold;color:#f2f2f2;letter-spacing:-0.45px">Transparency</div>
<svg style="left:1610px;top:467px" width="13" height="10"><path d="M0 1 H12 M0 5 H12 M0 9 H12" stroke="#c8c8c8" stroke-width="1.2"/></svg>
<div class="a" style="left:1402px;top:493px;width:92px;height:20px;background:#474747;border:1px solid #3e3e3e;border-radius:2px"></div>
<div class="t" style="left:1409px;top:498px;font-size:11px;color:#f0f0f0">Normal</div>
<svg style="left:1481px;top:499px" width="10" height="8"><path d="M1 1.5 L4.5 5 L8 1.5" stroke="#e0e0e0" stroke-width="1.4" fill="none"/></svg>
<div class="t" style="left:1500px;top:498px;font-size:11px;color:#c0c0c0">Opacity:</div>
<div class="a" style="left:1540px;top:493px;width:69px;height:20px;border:1px solid #474747;border-radius:2px"></div>
<div class="a" style="left:1541px;top:494px;width:50px;height:18px;background:#474747"></div>
<div class="t" style="left:1544px;top:498px;font-size:11px;color:#f0f0f0">100%</div>
<svg style="left:1596px;top:498px" width="8" height="10"><path d="M2 1 L5.5 4.5 L2 8" stroke="#e0e0e0" stroke-width="1.4" fill="none"/></svg>
<div class="a" style="left:1402px;top:518px;width:220px;height:2px;background:#474747"></div>
<div class="a" style="left:1402px;top:527px;width:136px;height:56px;border:1px solid #4a4a4a;border-radius:3px"></div>
<div class="a" style="left:1541px;top:525px;width:78px;height:20px;background:#5a5a5a"></div>
<div class="t" style="left:1555px;top:530px;font-size:10.5px;color:#7a7a7a">Make Mask</div>
<div class="a" style="left:1542px;top:551px;width:12px;height:12px;border:1px solid #6a6a6a;border-radius:1px"></div>
<div class="a" style="left:1542px;top:571px;width:12px;height:12px;border:1px solid #6a6a6a;border-radius:1px"></div>
<div class="t" style="left:1559px;top:552px;font-size:10.5px;color:#7a7a7a">Clip</div>
<div class="t" style="left:1559px;top:572px;font-size:10.5px;color:#7a7a7a">Invert Mask</div>
<!-- Appearance -->
<div class="a" style="left:1395px;top:590px;width:233px;height:218px;background:#535353;border:1px solid #3a3a3a;box-shadow:0 0 3px rgba(0,0,0,0.3)"></div>
<div class="a" style="left:1396px;top:591px;width:231px;height:13px;background:#424242"></div>
<svg style="left:1598px;top:593px" width="28" height="10"><path d="M5 1 L2 4.5 L5 8 M10 1 L7 4.5 L10 8" stroke="#cfcfcf" stroke-width="1.3" fill="none"/><path d="M19 1.5 L25 7.5 M25 1.5 L19 7.5" stroke="#d8d8d8" stroke-width="1.8"/></svg>
<div class="a" style="left:1396px;top:604px;width:231px;height:27px;background:#424242"></div>
<div class="a" style="left:1396px;top:604px;width:73px;height:27px;background:#535353"></div>
<div class="t" style="left:1405px;top:613px;font-size:11px;font-weight:bold;color:#f2f2f2;letter-spacing:-0.45px">Appearance</div>
<svg style="left:1610px;top:613px" width="13" height="10"><path d="M0 1 H12 M0 5 H12 M0 9 H12" stroke="#c8c8c8" stroke-width="1.2"/></svg>
<div class="a" style="left:1402px;top:639px;width:220px;height:141px;border:1px solid #5e5e5e;border-radius:3px;overflow:hidden"></div>
<svg style="left:1402px;top:639px;overflow:hidden" width="220" height="140">
<g fill="#5e5e5e"><rect x="1" y="24" width="207" height="1"/><rect x="1" y="49" width="207" height="1"/><rect x="1" y="74" width="207" height="1"/><rect x="1" y="99" width="207" height="1"/><rect x="1" y="124" width="207" height="1"/><rect x="25" y="25" width="1" height="116"/></g>
<rect x="3.5" y="3.5" width="18" height="18" fill="#000" stroke="#fff" stroke-width="1.2"/>
<text x="50" y="16" font-size="11" font-weight="bold" fill="#f0f0f0" font-family="Liberation Sans">No Selection</text>
<g fill="#cfcfcf"><path d="M4 37 Q11 30 18 37 Q11 44 4 37 Z"/><path d="M4 87 Q11 80 18 87 Q11 94 4 87 Z"/></g>
<g fill="#6a6a6a"><path d="M4 62 Q11 55 18 62 Q11 69 4 62 Z"/><path d="M4 112 Q11 105 18 112 Q11 119 4 112 Z"/><path d="M4 137 Q11 130 18 137 Q11 144 4 137 Z"/></g>
<g fill="#535353"><circle cx="11" cy="37" r="2.2"/><circle cx="11" cy="87" r="2.2"/><circle cx="11" cy="62" r="2.2"/><circle cx="11" cy="112" r="2.2"/><circle cx="11" cy="137" r="2.2"/></g>
<path d="M32 35 L35.5 38.5 L39 35 M32 85 L35.5 88.5 L39 85" stroke="#d8d8d8" stroke-width="1.4" fill="none"/>
<g font-size="11" fill="#e6e6e6" font-family="Liberation Sans"><text x="50" y="41">Stroke:</text><text x="50" y="91">Fill:</text><text x="73" y="66">Opacity:</text><text x="115" y="66">Default</text><text x="73" y="116">Opacity:</text><text x="115" y="116">Default</text><text x="50" y="141">Opacity:</text><text x="92" y="141">Default</text></g>
<g stroke="#bdbdbd" stroke-dasharray="1 1" stroke-width="1"><path d="M50 44.5 H85 M73 69.5 H112 M73 119.5 H112"/></g>
<rect x="92.5" y="28.5" width="17" height="17" fill="#fff" stroke="#000" stroke-width="1"/><path d="M96 42 L106 32" stroke="#e01b1b" stroke-width="2"/>
<rect x="92.5" y="78.5" width="17" height="17" fill="#fff" stroke="#000" stroke-width="1"/><rect x="95" y="81" width="12" height="12" fill="#000"/>
<path d="M210 10 L214 6 L218 10 M210 131 L214 135 L218 131" stroke="#888" stroke-width="1.1" fill="none"/>
<rect x="209" y="13" width="9" height="110" rx="4" fill="#5a5a5a"/>
</svg>
<svg style="left:1402px;top:782px" width="220" height="16">
<rect x="6.5" y="2.5" width="10" height="10" fill="none" stroke="#d0d0d0" stroke-width="1.6"/>
<rect x="31.5" y="2.5" width="10" height="10" fill="#aaa" stroke="#d0d0d0" stroke-width="1.6"/>
<text x="57" y="12" font-size="13" font-style="italic" fill="#c8c8c8" font-family="Liberation Serif">fx</text><path d="M69 12 l2 2 l2 -2 z" fill="#c8c8c8"/>
<circle cx="139" cy="8" r="5" fill="none" stroke="#d0d0d0" stroke-width="1.8"/><path d="M135.5 4.5 L142.5 11.5" stroke="#d0d0d0" stroke-width="1.8"/>
<path d="M161 2 h10 v10 h-6 v-4 h-4 z" fill="#6a6a6a"/>
<path d="M186 4 h11 M189 4 v-2 h5 v2 M187.5 5 v9 h8 v-9" stroke="#6a6a6a" stroke-width="1.2" fill="none"/>
</svg>
<div class="a" style="left:1396px;top:800px;width:231px;height:7px;background:#474747"></div>
<div class="a" style="left:1502px;top:801px;width:22px;height:4px;background:repeating-linear-gradient(90deg,#2e2e2e 0 1px,transparent 1px 2px)"></div>

<!-- status.html -->
<div class="a" style="left:13px;top:1142px;width:1618px;height:17px;background:#4a4a4a;border-top:1px solid #3c3c3c"></div>
<div class="a" style="left:14px;top:1143px;width:53px;height:15px;background:#464646"></div>
<div class="t" style="left:20px;top:1147px;font-size:10px;color:#e6e6e6">400%</div>
<svg style="left:70px;top:1148px" width="10" height="8"><path d="M1 1.5 L4.5 5 L8 1.5" stroke="#d8d8d8" stroke-width="1.3" fill="none"/></svg>
<div class="a" style="left:85px;top:1143px;width:41px;height:15px;background:#535353"></div>
<svg style="left:90px;top:1146px" width="40" height="10"><path d="M4 1 V9" stroke="#777" stroke-width="1.5"/><path d="M12 1 L6 5 L12 9 Z M28 1 L22 5 L28 9 Z" fill="#777"/></svg>
<div class="a" style="left:127px;top:1143px;width:40px;height:15px;background:#464646"></div>
<div class="t" style="left:130px;top:1147px;font-size:10px;color:#e6e6e6">1</div>
<svg style="left:170px;top:1148px" width="10" height="8"><path d="M1 1.5 L4.5 5 L8 1.5" stroke="#d8d8d8" stroke-width="1.3" fill="none"/></svg>
<div class="a" style="left:185px;top:1143px;width:41px;height:15px;background:#535353"></div>
<svg style="left:192px;top:1146px" width="40" height="10"><path d="M3 1 L9 5 L3 9 Z M18 1 L24 5 L18 9 Z" fill="#777"/><path d="M26 1 V9" stroke="#777" stroke-width="1.5"/></svg>
<div class="a" style="left:227px;top:1143px;width:200px;height:15px;background:#535353"></div>
<div class="t" style="left:307px;top:1147px;font-size:10.5px;color:#d6d6d6">Selection</div>
<div class="a" style="left:427px;top:1143px;width:18px;height:15px;background:#5a5a5a"></div>
<svg style="left:432px;top:1146px" width="8" height="10"><path d="M1 1 L7 5 L1 9 Z" fill="#d8d8d8"/></svg>
<svg style="left:450px;top:1146px" width="8" height="10"><path d="M6 1 L2 5 L6 9" stroke="#aaa" stroke-width="1.2" fill="none"/></svg>
<div class="a" style="left:1019px;top:1143px;width:25px;height:15px;background:#626262;border-radius:7px"></div>
<svg style="left:1601px;top:1146px" width="8" height="10"><path d="M2 1 L6 5 L2 9" stroke="#aaa" stroke-width="1.2" fill="none"/></svg>
<div class="a" style="left:8px;top:1158px;width:1624px;height:2px;background:#3a3a3a"></div>

<!-- taskbar.html -->
<div class="a" style="left:0;top:1160px;width:1920px;height:40px;background:linear-gradient(90deg,#2d2d2d 0px,#353535 250px,#3e3e3e 550px,#3c3c3c 800px,#2e2e2e 930px,#232a33 1000px,#1e2a3a 1100px,#1d2a3b 1500px,#1b2738 1920px)"></div>
<div class="a" style="left:4px;top:1160px;width:1px;height:40px;background:#7a7a7a"></div>
<svg style="left:0;top:1160px" width="1920" height="40" viewBox="0 0 1920 40">
<path d="M25 8 H41 V22 H32 L28 26 V22 H25 Z" fill="#fff"/><path d="M28 12 H38 M28 15 H38 M28 18 H35" stroke="#333" stroke-width="1"/>
<circle cx="25" cy="28" r="8" fill="#2a2a2a" stroke="#888" stroke-width="1"/><text x="21.5" y="32.5" font-size="11" fill="#fff" font-family="Liberation Sans">3</text>
<text x="88.5" y="15.5" font-size="11.5" fill="#fff" font-family="Liberation Sans" text-anchor="middle">01:55</text>
<text x="88.5" y="33" font-size="11.5" fill="#fff" font-family="Liberation Sans" text-anchor="middle">14/03/2021</text>
<text x="141" y="25" font-size="12" fill="#fff" font-family="Liberation Sans" text-anchor="middle" style="unicode-bidi:bidi-override;direction:ltr">רבע</text>
<path d="M165.5 15.5 H178.5 V24.5 H165.5 Z M172 24.5 V28 M168 28.5 H176 M163 14 V28" stroke="#fff" stroke-width="1.1" fill="none"/><rect x="163" y="14" width="4" height="4" fill="none" stroke="#fff" stroke-width="1"/>
<path d="M188 16 H191 L195 12 V28 L191 24 H188 Z" fill="none" stroke="#fff" stroke-width="1.1"/><path d="M198 16 Q200 20 198 24 M201 14 Q204 20 201 26 M204 12 Q208 20 204 28" stroke="#fff" stroke-width="1.1" fill="none"/>
<path d="M213 24 L219 18 L225 24" stroke="#fff" stroke-width="1.4" fill="none"/>
<rect x="1332" y="0" width="48" height="40" fill="#3b4a5c" opacity="0.75"/>
<rect x="1041" y="37" width="40" height="3" fill="#76b9ed"/>
<rect x="1090" y="37" width="40" height="3" fill="#76b9ed"/>
<rect x="1140" y="37" width="40" height="3" fill="#76b9ed"/>
<rect x="1189" y="37" width="40" height="3" fill="#76b9ed"/>
<rect x="1238" y="37" width="40" height="3" fill="#76b9ed"/>
<rect x="1336" y="37" width="40" height="3" fill="#76b9ed"/>
<rect x="1384" y="37" width="40" height="3" fill="#76b9ed"/>
<rect x="1433" y="37" width="40" height="3" fill="#76b9ed"/>
<rect x="1482" y="37" width="40" height="3" fill="#76b9ed"/>
<rect x="1531" y="37" width="40" height="3" fill="#76b9ed"/>
<rect x="1580" y="37" width="40" height="3" fill="#76b9ed"/>
<rect x="1630" y="37" width="40" height="3" fill="#76b9ed"/>
<rect x="1728" y="37" width="40" height="3" fill="#76b9ed"/>
<rect x="1777" y="37" width="40" height="3" fill="#76b9ed"/>
<rect x="1332" y="37" width="48" height="3" fill="#76b9ed"/>
<path d="M1049 10 H1058 L1061 13 H1073 V29 H1049 Z" fill="#f3c44d"/><rect x="1049" y="15" width="24" height="14" fill="#fad462"/><rect x="1055" y="21" width="12" height="6" fill="#3c8ee0"/><rect x="1058" y="27" width="6" height="3" fill="#3c8ee0"/>
<rect x="1099" y="9" width="22" height="7" fill="#8e3a8e"/><rect x="1099" y="16" width="22" height="7" fill="#2d5fb8"/><rect x="1099" y="23" width="22" height="7" fill="#2ea44f"/><rect x="1108" y="9" width="4" height="21" fill="#c9a24a"/>
<rect x="1158" y="10" width="14" height="20" fill="#fff" stroke="#1d6f42"/><path d="M1161 14 H1170 M1161 18 H1170 M1161 22 H1170 M1161 26 H1170 M1165 12 V28" stroke="#1d6f42" stroke-width="1"/><path d="M1147 11 L1161 8 V32 L1147 29 Z" fill="#1d6f42"/><text x="1150" y="25" font-size="11" font-weight="bold" fill="#fff" font-family="Liberation Sans">X</text>
<rect x="1199" y="8" width="19" height="24" rx="1" fill="#b8c2cc" stroke="#8a96a2"/><rect x="1201" y="10" width="15" height="5" fill="#4fc3f7"/><rect x="1201" y="17" width="4" height="4" fill="#e9eef2"/><rect x="1201" y="22" width="4" height="4" fill="#e9eef2"/><rect x="1201" y="27" width="4" height="4" fill="#e9eef2"/><rect x="1206" y="17" width="4" height="4" fill="#e9eef2"/><rect x="1206" y="22" width="4" height="4" fill="#e9eef2"/><rect x="1206" y="27" width="4" height="4" fill="#e9eef2"/><rect x="1211" y="17" width="4" height="4" fill="#e9eef2"/><rect x="1211" y="22" width="4" height="4" fill="#e9eef2"/><rect x="1211" y="27" width="4" height="4" fill="#e9eef2"/><rect x="1211" y="22" width="5" height="9" fill="#1d4f8c"/>
<circle cx="1262" cy="15" r="6.5" fill="none" stroke="#f08c1e" stroke-width="3"/><path d="M1257 20 L1250 28" stroke="#f08c1e" stroke-width="3.5" stroke-linecap="round"/>
<ellipse cx="1307" cy="20" rx="11" ry="12" fill="#d9141e"/><ellipse cx="1307" cy="20" rx="4.5" ry="8.5" fill="#1c2a3c"/>
<rect x="1345" y="9" width="22" height="21" fill="#330000" stroke="#ff9a00" stroke-width="1.5"/><text x="1348" y="25" font-size="12" font-weight="bold" fill="#ff9a00" font-family="Liberation Sans">Ai</text>
<rect x="1393" y="9" width="22" height="21" fill="#001e36" stroke="#31a8ff" stroke-width="1.5"/><text x="1395" y="25" font-size="12" font-weight="bold" fill="#31a8ff" font-family="Liberation Sans">Ps</text>
<rect x="1442" y="9" width="22" height="21" fill="#49021f" stroke="#ff3366" stroke-width="1.5"/><text x="1446" y="25" font-size="12" font-weight="bold" fill="#ff3366" font-family="Liberation Sans">Id</text>
<circle cx="1502" cy="20" r="11" fill="#1e8fd6"/><path d="M1492 22 C1494 12 1510 10 1513 20 C1510 16 1500 16 1498 22 C1497 28 1506 31 1512 27 C1506 33 1493 31 1492 22 Z" fill="#5ad27a"/>
<rect x="1540" y="9" width="22" height="22" rx="3" fill="#e8e8e8"/><path d="M1544 27 C1548 20 1553 14 1551 11 C1549 13 1550 19 1558 24 C1553 23 1547 25 1544 27 Z" fill="none" stroke="#333" stroke-width="1.4"/>
<path d="M1600 8 L1610 30 H1590 Z" fill="#f28b1c"/><path d="M1594 18 H1606 M1592 24 H1608" stroke="#fff" stroke-width="2.5"/><rect x="1589" y="29" width="22" height="3" fill="#f28b1c"/>
<circle cx="1650" cy="20" r="11" fill="#db4437"/><path d="M1650 20 L1640.5 25.5 A11 11 0 0 1 1650 9 Z" fill="#0f9d58"/><path d="M1650 20 L1659.5 25.5 A11 11 0 0 1 1640.5 25.5 Z" fill="#f4b400"/><circle cx="1650" cy="20" r="5" fill="#fff"/><circle cx="1650" cy="20" r="3.8" fill="#4285f4"/>
<path d="M1689 9 L1699 13 L1709 9 V26 L1699 32 L1689 26 Z" fill="#c01818"/><path d="M1693 14 L1699 18 L1705 14 V24 L1699 27 L1693 24 Z" fill="#1c2a3c"/>
<rect x="1738" y="10" width="20" height="18" fill="#d8a24a" transform="rotate(-8 1748 19)"/><rect x="1740" y="12" width="18" height="15" fill="#6ba0c8"/><circle cx="1752" cy="23" r="4" fill="#2a7a3a" stroke="#ddd"/>
<rect x="1795" y="10" width="14" height="20" fill="#fff" stroke="#2b579a"/><path d="M1798 14 H1807 M1798 18 H1807 M1798 22 H1807 M1798 26 H1807" stroke="#2b579a" stroke-width="1.2"/><path d="M1784 11 L1798 8 V32 L1784 29 Z" fill="#2b579a"/><text x="1786" y="25" font-size="10" font-weight="bold" fill="#fff" font-family="Liberation Sans">W</text>
<path d="M1838 12 H1856 M1838 28 H1856" stroke="#fff" stroke-width="1.3"/><rect x="1841.5" y="15.5" width="11" height="9" fill="none" stroke="#fff" stroke-width="1.3"/><path d="M1837 15 V25 M1857 15 V25" stroke="#fff" stroke-width="1.3"/>
<path d="M1885 12 L1895 10.5 V19 H1885 Z M1897 10 L1909 8 V19 H1897 Z M1885 21 H1895 V29.5 L1885 28 Z M1897 21 H1909 V32 L1897 30 Z" fill="#fff"/>
</svg>
</body></html>
